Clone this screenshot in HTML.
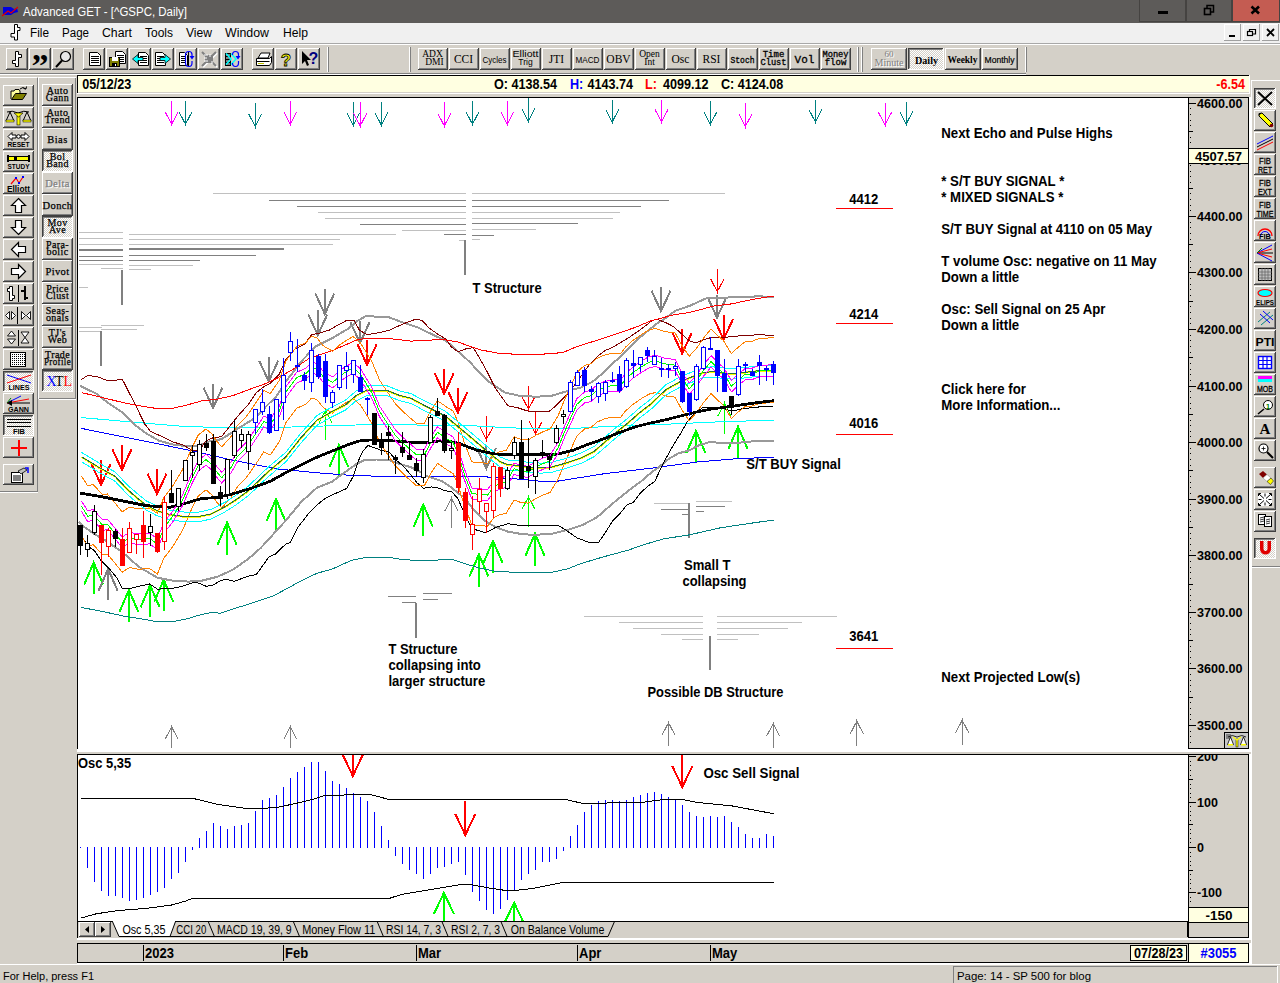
<!DOCTYPE html><html><head><meta charset="utf-8"><title>Advanced GET - [^GSPC, Daily]</title>
<style>html,body{margin:0;padding:0;background:#d4d0c8}svg{display:block}text{white-space:pre}</style></head><body>
<svg width="1280" height="983" viewBox="0 0 1280 983">
<defs><pattern id="hatch" width="2" height="2" patternUnits="userSpaceOnUse"><rect width="2" height="2" fill="#fff"/><rect width="1" height="1" fill="#d4d0c8"/><rect x="1" y="1" width="1" height="1" fill="#d4d0c8"/></pattern>
<clipPath id="cosc"><rect x="78" y="755" width="1110" height="166"/></clipPath>
<clipPath id="cmain"><rect x="78" y="98" width="1110" height="651"/></clipPath></defs>
<rect x="0" y="0" width="1280" height="983" fill="#d4d0c8" />
<rect x="0" y="0" width="1280" height="23" fill="#5d5b59" />
<path d="M3,7 L11,7 L14,9 L17,8 L18,12 L14,13 L11,15 L3,15 Z" fill="#0000e0"/>
<path d="M2,16 L8,11 L11,13 L18,7" fill="none" stroke="#e00000" stroke-width="1.3"/>
<text x="23" y="16" font-size="12" font-weight="normal" fill="#fff" text-anchor="start" font-family="'Liberation Sans',sans-serif" textLength="164" lengthAdjust="spacingAndGlyphs" >Advanced GET - [^GSPC, Daily]</text>
<rect x="1139" y="0" width="47" height="22" fill="#454341" />
<rect x="1140" y="0" width="45" height="21" fill="#5d5b59" />
<rect x="1186" y="0" width="46" height="22" fill="#454341" />
<rect x="1187" y="0" width="44" height="21" fill="#5d5b59" />
<rect x="1232" y="0" width="48" height="22" fill="#454341" />
<rect x="1233" y="0" width="46" height="21" fill="#c45c52" />
<rect x="1158" y="11" width="10" height="3" fill="#000" />
<rect x="1204.500" y="8.500" width="6" height="6" fill="none" stroke="#000" stroke-width="1.600"/><path d="M1207,8V5.500H1213.500V12H1211" fill="none" stroke="#000" stroke-width="1.500"/>
<path d="M1251.5,6.5L1259,13.5M1259,6.500L1251.500,13.500" stroke="#000" stroke-width="2.6"/>
<rect x="0" y="23" width="1280" height="20" fill="#f0f0f0" />
<rect x="0" y="43" width="1280" height="1" fill="#a8a8a8"/>
<path d="M14.5,24.5h3v3h2.500v3h-2.500v9.500h-3v-3h-3.500v-3.500h3.500z" fill="#fff" stroke="#000" stroke-width="1"/>
<text x="30" y="37" font-size="12" font-weight="normal" fill="#000" text-anchor="start" font-family="'Liberation Sans',sans-serif" textLength="19" lengthAdjust="spacingAndGlyphs" >File</text>
<text x="62" y="37" font-size="12" font-weight="normal" fill="#000" text-anchor="start" font-family="'Liberation Sans',sans-serif" textLength="27" lengthAdjust="spacingAndGlyphs" >Page</text>
<text x="102" y="37" font-size="12" font-weight="normal" fill="#000" text-anchor="start" font-family="'Liberation Sans',sans-serif" textLength="30" lengthAdjust="spacingAndGlyphs" >Chart</text>
<text x="145" y="37" font-size="12" font-weight="normal" fill="#000" text-anchor="start" font-family="'Liberation Sans',sans-serif" textLength="28" lengthAdjust="spacingAndGlyphs" >Tools</text>
<text x="186" y="37" font-size="12" font-weight="normal" fill="#000" text-anchor="start" font-family="'Liberation Sans',sans-serif" textLength="26" lengthAdjust="spacingAndGlyphs" >View</text>
<text x="225" y="37" font-size="12" font-weight="normal" fill="#000" text-anchor="start" font-family="'Liberation Sans',sans-serif" textLength="44" lengthAdjust="spacingAndGlyphs" >Window</text>
<text x="283" y="37" font-size="12" font-weight="normal" fill="#000" text-anchor="start" font-family="'Liberation Sans',sans-serif" textLength="25" lengthAdjust="spacingAndGlyphs" >Help</text>
<rect x="1224" y="24" width="17" height="17" fill="#f0f0f0" />
<rect x="1224" y="24" width="17" height="1" fill="#fff"/>
<rect x="1224" y="24" width="1" height="17" fill="#fff"/>
<rect x="1224" y="40" width="17" height="1" fill="#a0a0a0"/>
<rect x="1240" y="24" width="1" height="17" fill="#a0a0a0"/>
<rect x="1243" y="24" width="17" height="17" fill="#f0f0f0" />
<rect x="1243" y="24" width="17" height="1" fill="#fff"/>
<rect x="1243" y="24" width="1" height="17" fill="#fff"/>
<rect x="1243" y="40" width="17" height="1" fill="#a0a0a0"/>
<rect x="1259" y="24" width="1" height="17" fill="#a0a0a0"/>
<rect x="1262" y="24" width="17" height="17" fill="#f0f0f0" />
<rect x="1262" y="24" width="17" height="1" fill="#fff"/>
<rect x="1262" y="24" width="1" height="17" fill="#fff"/>
<rect x="1262" y="40" width="17" height="1" fill="#a0a0a0"/>
<rect x="1278" y="24" width="1" height="17" fill="#a0a0a0"/>
<rect x="1229" y="35" width="6" height="2" fill="#000" />
<rect x="1247.500" y="31.500" width="5" height="4" fill="none" stroke="#000" stroke-width="1.200"/><path d="M1249.500,31V29.500H1255.500V34H1253" fill="none" stroke="#000" stroke-width="1.200"/>
<path d="M1267,29L1274,36M1274,29L1267,36" stroke="#000" stroke-width="1.800"/>
<rect x="0" y="44" width="1280" height="1" fill="#fff"/>
<rect x="0" y="73" width="1026" height="1" fill="#808080"/>
<rect x="0" y="74" width="1026" height="1" fill="#fff"/>
<g transform="translate(0,1)">
<rect x="6" y="47" width="22" height="22" fill="#d4d0c8" />
<rect x="6" y="47" width="21" height="1" fill="#fff"/>
<rect x="6" y="47" width="1" height="21" fill="#fff"/>
<rect x="6" y="68" width="22" height="1" fill="#404040"/>
<rect x="27" y="47" width="1" height="22" fill="#404040"/>
<rect x="7" y="67" width="20" height="1" fill="#808080"/>
<rect x="26" y="48" width="1" height="20" fill="#808080"/>
<rect x="29" y="47" width="22" height="22" fill="#d4d0c8" />
<rect x="29" y="47" width="21" height="1" fill="#fff"/>
<rect x="29" y="47" width="1" height="21" fill="#fff"/>
<rect x="29" y="68" width="22" height="1" fill="#404040"/>
<rect x="50" y="47" width="1" height="22" fill="#404040"/>
<rect x="30" y="67" width="20" height="1" fill="#808080"/>
<rect x="49" y="48" width="1" height="20" fill="#808080"/>
<rect x="52" y="47" width="22" height="22" fill="#d4d0c8" />
<rect x="52" y="47" width="21" height="1" fill="#fff"/>
<rect x="52" y="47" width="1" height="21" fill="#fff"/>
<rect x="52" y="68" width="22" height="1" fill="#404040"/>
<rect x="73" y="47" width="1" height="22" fill="#404040"/>
<rect x="53" y="67" width="20" height="1" fill="#808080"/>
<rect x="72" y="48" width="1" height="20" fill="#808080"/>
<rect x="83" y="47" width="22" height="22" fill="#d4d0c8" />
<rect x="83" y="47" width="21" height="1" fill="#fff"/>
<rect x="83" y="47" width="1" height="21" fill="#fff"/>
<rect x="83" y="68" width="22" height="1" fill="#404040"/>
<rect x="104" y="47" width="1" height="22" fill="#404040"/>
<rect x="84" y="67" width="20" height="1" fill="#808080"/>
<rect x="103" y="48" width="1" height="20" fill="#808080"/>
<rect x="106" y="47" width="22" height="22" fill="#d4d0c8" />
<rect x="106" y="47" width="21" height="1" fill="#fff"/>
<rect x="106" y="47" width="1" height="21" fill="#fff"/>
<rect x="106" y="68" width="22" height="1" fill="#404040"/>
<rect x="127" y="47" width="1" height="22" fill="#404040"/>
<rect x="107" y="67" width="20" height="1" fill="#808080"/>
<rect x="126" y="48" width="1" height="20" fill="#808080"/>
<rect x="129" y="47" width="22" height="22" fill="#d4d0c8" />
<rect x="129" y="47" width="21" height="1" fill="#fff"/>
<rect x="129" y="47" width="1" height="21" fill="#fff"/>
<rect x="129" y="68" width="22" height="1" fill="#404040"/>
<rect x="150" y="47" width="1" height="22" fill="#404040"/>
<rect x="130" y="67" width="20" height="1" fill="#808080"/>
<rect x="149" y="48" width="1" height="20" fill="#808080"/>
<rect x="152" y="47" width="22" height="22" fill="#d4d0c8" />
<rect x="152" y="47" width="21" height="1" fill="#fff"/>
<rect x="152" y="47" width="1" height="21" fill="#fff"/>
<rect x="152" y="68" width="22" height="1" fill="#404040"/>
<rect x="173" y="47" width="1" height="22" fill="#404040"/>
<rect x="153" y="67" width="20" height="1" fill="#808080"/>
<rect x="172" y="48" width="1" height="20" fill="#808080"/>
<rect x="175" y="47" width="22" height="22" fill="#d4d0c8" />
<rect x="175" y="47" width="21" height="1" fill="#fff"/>
<rect x="175" y="47" width="1" height="21" fill="#fff"/>
<rect x="175" y="68" width="22" height="1" fill="#404040"/>
<rect x="196" y="47" width="1" height="22" fill="#404040"/>
<rect x="176" y="67" width="20" height="1" fill="#808080"/>
<rect x="195" y="48" width="1" height="20" fill="#808080"/>
<rect x="198" y="47" width="22" height="22" fill="#d4d0c8" />
<rect x="198" y="47" width="21" height="1" fill="#fff"/>
<rect x="198" y="47" width="1" height="21" fill="#fff"/>
<rect x="198" y="68" width="22" height="1" fill="#404040"/>
<rect x="219" y="47" width="1" height="22" fill="#404040"/>
<rect x="199" y="67" width="20" height="1" fill="#808080"/>
<rect x="218" y="48" width="1" height="20" fill="#808080"/>
<rect x="221" y="47" width="22" height="22" fill="#d4d0c8" />
<rect x="221" y="47" width="21" height="1" fill="#fff"/>
<rect x="221" y="47" width="1" height="21" fill="#fff"/>
<rect x="221" y="68" width="22" height="1" fill="#404040"/>
<rect x="242" y="47" width="1" height="22" fill="#404040"/>
<rect x="222" y="67" width="20" height="1" fill="#808080"/>
<rect x="241" y="48" width="1" height="20" fill="#808080"/>
<rect x="252" y="47" width="22" height="22" fill="#d4d0c8" />
<rect x="252" y="47" width="21" height="1" fill="#fff"/>
<rect x="252" y="47" width="1" height="21" fill="#fff"/>
<rect x="252" y="68" width="22" height="1" fill="#404040"/>
<rect x="273" y="47" width="1" height="22" fill="#404040"/>
<rect x="253" y="67" width="20" height="1" fill="#808080"/>
<rect x="272" y="48" width="1" height="20" fill="#808080"/>
<rect x="275" y="47" width="22" height="22" fill="#d4d0c8" />
<rect x="275" y="47" width="21" height="1" fill="#fff"/>
<rect x="275" y="47" width="1" height="21" fill="#fff"/>
<rect x="275" y="68" width="22" height="1" fill="#404040"/>
<rect x="296" y="47" width="1" height="22" fill="#404040"/>
<rect x="276" y="67" width="20" height="1" fill="#808080"/>
<rect x="295" y="48" width="1" height="20" fill="#808080"/>
<rect x="298" y="47" width="22" height="22" fill="#d4d0c8" />
<rect x="298" y="47" width="21" height="1" fill="#fff"/>
<rect x="298" y="47" width="1" height="21" fill="#fff"/>
<rect x="298" y="68" width="22" height="1" fill="#404040"/>
<rect x="319" y="47" width="1" height="22" fill="#404040"/>
<rect x="299" y="67" width="20" height="1" fill="#808080"/>
<rect x="318" y="48" width="1" height="20" fill="#808080"/>
<path d="M15.5,50.5h3v3h3v3h-3v9h-3v-3h-3v-3h3z" fill="#fff" stroke="#000" stroke-width="1"/>
<text x="40" y="75.5" font-size="34" font-weight="bold" fill="#000" text-anchor="middle" font-family="'Liberation Serif',serif" >”</text>
<circle cx="65.5" cy="55.5" r="5" fill="#e8e8e8" stroke="#000" stroke-width="1.2"/><path d="M62,59.5L56,66" stroke="#000" stroke-width="2"/>
<path d="M89.5,51.5h8l3,3v10h-11z" fill="#fff" stroke="#000" stroke-width="1"/>
<rect x="91" y="55" width="8" height="1" fill="#000"/>
<rect x="91" y="57" width="8" height="1" fill="#000"/>
<rect x="91" y="59" width="8" height="1" fill="#000"/>
<rect x="91" y="61" width="8" height="1" fill="#000"/>
<path d="M115.5,50.5h7l3,3v9h-10z" fill="#fff" stroke="#000" stroke-width="1"/>
<rect x="117" y="54" width="7" height="1" fill="#000"/>
<rect x="117" y="56" width="7" height="1" fill="#000"/>
<rect x="117" y="58" width="7" height="1" fill="#000"/>
<rect x="117" y="60" width="7" height="1" fill="#000"/>
<rect x="109" y="56" width="11" height="10" fill="#000" />
<rect x="110" y="57" width="9" height="8" fill="#808000" />
<rect x="112" y="56" width="6" height="4" fill="#fff" />
<rect x="112" y="62" width="5" height="4" fill="#000" />
<rect x="115" y="63" width="1" height="2" fill="#fff" />
<path d="M138.5,51.5h7l3,3v10h-10z" fill="#fff" stroke="#000" stroke-width="1"/>
<rect x="140" y="55" width="7" height="1" fill="#000"/>
<rect x="140" y="57" width="7" height="1" fill="#000"/>
<rect x="140" y="59" width="7" height="1" fill="#000"/>
<rect x="140" y="61" width="7" height="1" fill="#000"/>
<path d="M132.5,58l5.5,-4.5v3h5v3h-5v3z" fill="#0ff" stroke="#000" stroke-width="0.8"/>
<path d="M155.5,51.5h7l3,3v10h-10z" fill="#fff" stroke="#000" stroke-width="1"/>
<rect x="157" y="55" width="7" height="1" fill="#000"/>
<rect x="157" y="57" width="7" height="1" fill="#000"/>
<rect x="157" y="59" width="7" height="1" fill="#000"/>
<rect x="157" y="61" width="7" height="1" fill="#000"/>
<path d="M170.5,58l-5.5,-4.5v3h-5v3h5v3z" fill="#0ff" stroke="#000" stroke-width="0.8"/>
<path d="M179.5,51.5h5l3,3v10h-8z" fill="#fff" stroke="#000" stroke-width="1"/>
<rect x="181" y="55" width="5" height="1" fill="#000"/>
<rect x="181" y="57" width="5" height="1" fill="#000"/>
<rect x="181" y="59" width="5" height="1" fill="#000"/>
<rect x="181" y="61" width="5" height="1" fill="#000"/>
<path d="M189,50.5q-3.500,0 -3.500,3.500v8q0,3.500 3.500,3.500M189,50.5q3,0 3,3v2M192,60v2q0,3.500 -3,3.500" fill="none" stroke="#00f" stroke-width="1.2"/><path d="M188.500,51v14" stroke="#000" stroke-width="1"/><path d="M189.500,55h5l-2.500,3.500z" fill="#00f"/>
<path d="M202,51L216,65M216,51L202,65" stroke="#fff" stroke-width="2" transform="translate(1,1)"/><path d="M202,51L216,65M216,51L202,65" stroke="#808080" stroke-width="2"/><rect x="205" y="54" width="8" height="8" fill="#808080"/><path d="M204,54h4M204,57h3M204,60h4M210,53v3M212,60v3" stroke="#fff" stroke-width="1"/>
<rect x="225" y="52" width="6" height="13" fill="#000" />
<path d="M226,54h4M226,57h4M226,60h4M226,63h4" stroke="#fff" stroke-width="1"/><path d="M226,52.500l5,5.500l-5,5.500M231,52.500l5,5.500l-5,5.500" fill="none" stroke="#0ff" stroke-width="1.6"/><path d="M235.500,50.500q-3,0 -3,3.500M232.500,62q0,3.500 3,3.500M235.500,50.500q3,0 3,3v2M238.500,60v2q0,3.500 -3,3.500" fill="none" stroke="#00f" stroke-width="1.2"/><path d="M235.500,55h5l-2.500,3.500z" fill="#00f"/>
<path d="M258,57l3,-5h9l-2,5z" fill="#fff" stroke="#000"/><path d="M256.500,57.500h13l2,-2v6l-2,3h-13z" fill="#fff" stroke="#000"/><path d="M256.500,60.500h13" stroke="#000"/><rect x="258" y="62" width="6" height="1" fill="#c0c000"/>
<text x="286" y="64.5" font-size="17" font-weight="bold" fill="#ffff00" text-anchor="middle" font-family="'Liberation Sans',sans-serif" stroke="#000" stroke-width="0.8">?</text>
<path d="M302,50v13l3,-3l2,5l2,-1l-2,-5h4z" fill="#000"/>
<text x="313.5" y="62.5" font-size="16" font-weight="bold" fill="#000080" text-anchor="middle" font-family="'Liberation Sans',sans-serif" >?</text>
<rect x="327" y="46" width="1" height="25" fill="#fff"/>
<rect x="328" y="46" width="1" height="25" fill="#808080"/>
<rect x="409" y="46" width="1" height="25" fill="#fff"/>
<rect x="410" y="46" width="1" height="25" fill="#808080"/>
<rect x="857" y="46" width="1" height="25" fill="#fff"/>
<rect x="858" y="46" width="1" height="25" fill="#808080"/>
<rect x="861" y="46" width="1" height="25" fill="#fff"/>
<rect x="862" y="46" width="1" height="25" fill="#808080"/>
<rect x="1025" y="46" width="1" height="25" fill="#fff"/>
<rect x="1026" y="46" width="1" height="25" fill="#808080"/>
<rect x="418" y="47" width="30" height="22" fill="#d4d0c8" />
<rect x="418" y="47" width="29" height="1" fill="#fff"/>
<rect x="418" y="47" width="1" height="21" fill="#fff"/>
<rect x="418" y="68" width="30" height="1" fill="#404040"/>
<rect x="447" y="47" width="1" height="22" fill="#404040"/>
<rect x="419" y="67" width="28" height="1" fill="#808080"/>
<rect x="446" y="48" width="1" height="20" fill="#808080"/>
<text x="432.5" y="56" font-size="9.5" font-weight="normal" fill="#000" text-anchor="middle" font-family="'Liberation Serif',serif" >ADX</text>
<text x="434.5" y="64" font-size="9.5" font-weight="normal" fill="#000" text-anchor="middle" font-family="'Liberation Serif',serif" >DMI</text>
<rect x="449" y="47" width="30" height="22" fill="#d4d0c8" />
<rect x="449" y="47" width="29" height="1" fill="#fff"/>
<rect x="449" y="47" width="1" height="21" fill="#fff"/>
<rect x="449" y="68" width="30" height="1" fill="#404040"/>
<rect x="478" y="47" width="1" height="22" fill="#404040"/>
<rect x="450" y="67" width="28" height="1" fill="#808080"/>
<rect x="477" y="48" width="1" height="20" fill="#808080"/>
<text x="463.5" y="61.5" font-size="11.5" font-weight="normal" fill="#000" text-anchor="middle" font-family="'Liberation Serif',serif" >CCI</text>
<rect x="480" y="47" width="30" height="22" fill="#d4d0c8" />
<rect x="480" y="47" width="29" height="1" fill="#fff"/>
<rect x="480" y="47" width="1" height="21" fill="#fff"/>
<rect x="480" y="68" width="30" height="1" fill="#404040"/>
<rect x="509" y="47" width="1" height="22" fill="#404040"/>
<rect x="481" y="67" width="28" height="1" fill="#808080"/>
<rect x="508" y="48" width="1" height="20" fill="#808080"/>
<text x="494.5" y="61.5" font-size="9" font-weight="normal" fill="#000" text-anchor="middle" font-family="'Liberation Sans',sans-serif" textLength="24" lengthAdjust="spacingAndGlyphs" >Cycles</text>
<rect x="511" y="47" width="30" height="22" fill="#d4d0c8" />
<rect x="511" y="47" width="29" height="1" fill="#fff"/>
<rect x="511" y="47" width="1" height="21" fill="#fff"/>
<rect x="511" y="68" width="30" height="1" fill="#404040"/>
<rect x="540" y="47" width="1" height="22" fill="#404040"/>
<rect x="512" y="67" width="28" height="1" fill="#808080"/>
<rect x="539" y="48" width="1" height="20" fill="#808080"/>
<text x="525.5" y="56" font-size="8.5" font-weight="normal" fill="#000" text-anchor="middle" font-family="'Liberation Sans',sans-serif" textLength="26" lengthAdjust="spacingAndGlyphs" >Elliott</text>
<text x="525.5" y="64" font-size="8.5" font-weight="normal" fill="#000" text-anchor="middle" font-family="'Liberation Sans',sans-serif" >Trig</text>
<rect x="542" y="47" width="30" height="22" fill="#d4d0c8" />
<rect x="542" y="47" width="29" height="1" fill="#fff"/>
<rect x="542" y="47" width="1" height="21" fill="#fff"/>
<rect x="542" y="68" width="30" height="1" fill="#404040"/>
<rect x="571" y="47" width="1" height="22" fill="#404040"/>
<rect x="543" y="67" width="28" height="1" fill="#808080"/>
<rect x="570" y="48" width="1" height="20" fill="#808080"/>
<text x="556.5" y="61.5" font-size="11.5" font-weight="normal" fill="#000" text-anchor="middle" font-family="'Liberation Serif',serif" >JTI</text>
<rect x="573" y="47" width="30" height="22" fill="#d4d0c8" />
<rect x="573" y="47" width="29" height="1" fill="#fff"/>
<rect x="573" y="47" width="1" height="21" fill="#fff"/>
<rect x="573" y="68" width="30" height="1" fill="#404040"/>
<rect x="602" y="47" width="1" height="22" fill="#404040"/>
<rect x="574" y="67" width="28" height="1" fill="#808080"/>
<rect x="601" y="48" width="1" height="20" fill="#808080"/>
<text x="587.5" y="61.5" font-size="8.5" font-weight="normal" fill="#000" text-anchor="middle" font-family="'Liberation Sans',sans-serif" textLength="24" lengthAdjust="spacingAndGlyphs" >MACD</text>
<rect x="604" y="47" width="30" height="22" fill="#d4d0c8" />
<rect x="604" y="47" width="29" height="1" fill="#fff"/>
<rect x="604" y="47" width="1" height="21" fill="#fff"/>
<rect x="604" y="68" width="30" height="1" fill="#404040"/>
<rect x="633" y="47" width="1" height="22" fill="#404040"/>
<rect x="605" y="67" width="28" height="1" fill="#808080"/>
<rect x="632" y="48" width="1" height="20" fill="#808080"/>
<text x="618.5" y="61.5" font-size="11.5" font-weight="normal" fill="#000" text-anchor="middle" font-family="'Liberation Serif',serif" >OBV</text>
<rect x="635" y="47" width="30" height="22" fill="#d4d0c8" />
<rect x="635" y="47" width="29" height="1" fill="#fff"/>
<rect x="635" y="47" width="1" height="21" fill="#fff"/>
<rect x="635" y="68" width="30" height="1" fill="#404040"/>
<rect x="664" y="47" width="1" height="22" fill="#404040"/>
<rect x="636" y="67" width="28" height="1" fill="#808080"/>
<rect x="663" y="48" width="1" height="20" fill="#808080"/>
<text x="649.5" y="56" font-size="9.5" font-weight="normal" fill="#000" text-anchor="middle" font-family="'Liberation Serif',serif" >Open</text>
<text x="649.5" y="64" font-size="9.5" font-weight="normal" fill="#000" text-anchor="middle" font-family="'Liberation Serif',serif" >Int</text>
<rect x="666" y="47" width="30" height="22" fill="#d4d0c8" />
<rect x="666" y="47" width="29" height="1" fill="#fff"/>
<rect x="666" y="47" width="1" height="21" fill="#fff"/>
<rect x="666" y="68" width="30" height="1" fill="#404040"/>
<rect x="695" y="47" width="1" height="22" fill="#404040"/>
<rect x="667" y="67" width="28" height="1" fill="#808080"/>
<rect x="694" y="48" width="1" height="20" fill="#808080"/>
<text x="680.5" y="61.5" font-size="11.5" font-weight="normal" fill="#000" text-anchor="middle" font-family="'Liberation Serif',serif" >Osc</text>
<rect x="697" y="47" width="30" height="22" fill="#d4d0c8" />
<rect x="697" y="47" width="29" height="1" fill="#fff"/>
<rect x="697" y="47" width="1" height="21" fill="#fff"/>
<rect x="697" y="68" width="30" height="1" fill="#404040"/>
<rect x="726" y="47" width="1" height="22" fill="#404040"/>
<rect x="698" y="67" width="28" height="1" fill="#808080"/>
<rect x="725" y="48" width="1" height="20" fill="#808080"/>
<text x="711.5" y="61.5" font-size="11.5" font-weight="normal" fill="#000" text-anchor="middle" font-family="'Liberation Serif',serif" >RSI</text>
<rect x="728" y="47" width="30" height="22" fill="#d4d0c8" />
<rect x="728" y="47" width="29" height="1" fill="#fff"/>
<rect x="728" y="47" width="1" height="21" fill="#fff"/>
<rect x="728" y="68" width="30" height="1" fill="#404040"/>
<rect x="757" y="47" width="1" height="22" fill="#404040"/>
<rect x="729" y="67" width="28" height="1" fill="#808080"/>
<rect x="756" y="48" width="1" height="20" fill="#808080"/>
<text x="742.5" y="61.5" font-size="9" font-weight="normal" fill="#000" text-anchor="middle" font-family="'Liberation Mono',monospace" textLength="24" lengthAdjust="spacingAndGlyphs" stroke="#000" stroke-width="0.3">Stoch</text>
<rect x="759" y="47" width="30" height="22" fill="#d4d0c8" />
<rect x="759" y="47" width="29" height="1" fill="#fff"/>
<rect x="759" y="47" width="1" height="21" fill="#fff"/>
<rect x="759" y="68" width="30" height="1" fill="#404040"/>
<rect x="788" y="47" width="1" height="22" fill="#404040"/>
<rect x="760" y="67" width="28" height="1" fill="#808080"/>
<rect x="787" y="48" width="1" height="20" fill="#808080"/>
<text x="773.5" y="56" font-size="9" font-weight="normal" fill="#000" text-anchor="middle" font-family="'Liberation Mono',monospace" stroke="#000" stroke-width="0.3">Time</text>
<text x="773.5" y="64" font-size="9" font-weight="normal" fill="#000" text-anchor="middle" font-family="'Liberation Mono',monospace" textLength="26" lengthAdjust="spacingAndGlyphs" stroke="#000" stroke-width="0.3">Clust</text>
<rect x="790" y="47" width="30" height="22" fill="#d4d0c8" />
<rect x="790" y="47" width="29" height="1" fill="#fff"/>
<rect x="790" y="47" width="1" height="21" fill="#fff"/>
<rect x="790" y="68" width="30" height="1" fill="#404040"/>
<rect x="819" y="47" width="1" height="22" fill="#404040"/>
<rect x="791" y="67" width="28" height="1" fill="#808080"/>
<rect x="818" y="48" width="1" height="20" fill="#808080"/>
<text x="804.5" y="61.5" font-size="11" font-weight="normal" fill="#000" text-anchor="middle" font-family="'Liberation Mono',monospace" stroke="#000" stroke-width="0.3">Vol</text>
<rect x="821" y="47" width="30" height="22" fill="#d4d0c8" />
<rect x="821" y="47" width="29" height="1" fill="#fff"/>
<rect x="821" y="47" width="1" height="21" fill="#fff"/>
<rect x="821" y="68" width="30" height="1" fill="#404040"/>
<rect x="850" y="47" width="1" height="22" fill="#404040"/>
<rect x="822" y="67" width="28" height="1" fill="#808080"/>
<rect x="849" y="48" width="1" height="20" fill="#808080"/>
<text x="835.5" y="56" font-size="9" font-weight="normal" fill="#000" text-anchor="middle" font-family="'Liberation Mono',monospace" textLength="26" lengthAdjust="spacingAndGlyphs" stroke="#000" stroke-width="0.3">Money</text>
<text x="835.5" y="64" font-size="9" font-weight="normal" fill="#000" text-anchor="middle" font-family="'Liberation Mono',monospace" stroke="#000" stroke-width="0.3">flow</text>
<rect x="871" y="47" width="36" height="22" fill="#d4d0c8" />
<rect x="871" y="47" width="35" height="1" fill="#fff"/>
<rect x="871" y="47" width="1" height="21" fill="#fff"/>
<rect x="871" y="68" width="36" height="1" fill="#404040"/>
<rect x="906" y="47" width="1" height="22" fill="#404040"/>
<rect x="872" y="67" width="34" height="1" fill="#808080"/>
<rect x="905" y="48" width="1" height="20" fill="#808080"/>
<text x="890" y="56.5" font-size="9" font-weight="normal" fill="#fff" text-anchor="middle" font-family="'Liberation Serif',serif" >60</text>
<text x="890" y="65.5" font-size="9.5" font-weight="normal" fill="#fff" text-anchor="middle" font-family="'Liberation Serif',serif" textLength="29" lengthAdjust="spacingAndGlyphs" >Minute</text>
<text x="889" y="55.5" font-size="9" font-weight="normal" fill="#808080" text-anchor="middle" font-family="'Liberation Serif',serif" >60</text>
<text x="889" y="64.5" font-size="9.5" font-weight="normal" fill="#808080" text-anchor="middle" font-family="'Liberation Serif',serif" textLength="29" lengthAdjust="spacingAndGlyphs" >Minute</text>
<rect x="908" y="47" width="36" height="22" fill="url(#hatch)" />
<rect x="908" y="47" width="35" height="1" fill="#404040"/>
<rect x="908" y="47" width="1" height="21" fill="#404040"/>
<rect x="909" y="48" width="33" height="1" fill="#808080"/>
<rect x="909" y="48" width="1" height="19" fill="#808080"/>
<rect x="908" y="68" width="36" height="1" fill="#fff"/>
<rect x="943" y="47" width="1" height="22" fill="#fff"/>
<text x="926.5" y="62.5" font-size="11" font-weight="bold" fill="#000" text-anchor="middle" font-family="'Liberation Serif',serif" textLength="23" lengthAdjust="spacingAndGlyphs" >Daily</text>
<rect x="945" y="47" width="36" height="22" fill="#d4d0c8" />
<rect x="945" y="47" width="35" height="1" fill="#fff"/>
<rect x="945" y="47" width="1" height="21" fill="#fff"/>
<rect x="945" y="68" width="36" height="1" fill="#404040"/>
<rect x="980" y="47" width="1" height="22" fill="#404040"/>
<rect x="946" y="67" width="34" height="1" fill="#808080"/>
<rect x="979" y="48" width="1" height="20" fill="#808080"/>
<text x="962.5" y="62" font-size="11" font-weight="bold" fill="#000" text-anchor="middle" font-family="'Liberation Serif',serif" textLength="30" lengthAdjust="spacingAndGlyphs" >Weekly</text>
<rect x="982" y="47" width="36" height="22" fill="#d4d0c8" />
<rect x="982" y="47" width="35" height="1" fill="#fff"/>
<rect x="982" y="47" width="1" height="21" fill="#fff"/>
<rect x="982" y="68" width="36" height="1" fill="#404040"/>
<rect x="1017" y="47" width="1" height="22" fill="#404040"/>
<rect x="983" y="67" width="34" height="1" fill="#808080"/>
<rect x="1016" y="48" width="1" height="20" fill="#808080"/>
<text x="999.5" y="61.5" font-size="9.5" font-weight="normal" fill="#000" text-anchor="middle" font-family="'Liberation Sans',sans-serif" textLength="30" lengthAdjust="spacingAndGlyphs" stroke="#000" stroke-width="0.2">Monthly</text>
</g>
<rect x="0" y="77" width="37" height="1" fill="#fff"/>
<rect x="37" y="78" width="1" height="414" fill="#808080"/>
<rect x="0" y="491" width="38" height="1" fill="#808080"/>
<rect x="0" y="492" width="38" height="1" fill="#fff"/>
<rect x="38" y="77" width="38" height="1" fill="#fff"/>
<rect x="38" y="77" width="1" height="322" fill="#fff"/>
<rect x="75" y="78" width="1" height="321" fill="#808080"/>
<rect x="39" y="398" width="37" height="1" fill="#808080"/>
<rect x="39" y="399" width="37" height="1" fill="#fff"/>
<rect x="3" y="85" width="31" height="21" fill="#d4d0c8" />
<rect x="3" y="85" width="30" height="1" fill="#fff"/>
<rect x="3" y="85" width="1" height="20" fill="#fff"/>
<rect x="3" y="105" width="31" height="1" fill="#404040"/>
<rect x="33" y="85" width="1" height="21" fill="#404040"/>
<rect x="4" y="104" width="29" height="1" fill="#808080"/>
<rect x="32" y="86" width="1" height="19" fill="#808080"/>
<rect x="3" y="107" width="31" height="21" fill="#d4d0c8" />
<rect x="3" y="107" width="30" height="1" fill="#fff"/>
<rect x="3" y="107" width="1" height="20" fill="#fff"/>
<rect x="3" y="127" width="31" height="1" fill="#404040"/>
<rect x="33" y="107" width="1" height="21" fill="#404040"/>
<rect x="4" y="126" width="29" height="1" fill="#808080"/>
<rect x="32" y="108" width="1" height="19" fill="#808080"/>
<rect x="3" y="129" width="31" height="21" fill="#d4d0c8" />
<rect x="3" y="129" width="30" height="1" fill="#fff"/>
<rect x="3" y="129" width="1" height="20" fill="#fff"/>
<rect x="3" y="149" width="31" height="1" fill="#404040"/>
<rect x="33" y="129" width="1" height="21" fill="#404040"/>
<rect x="4" y="148" width="29" height="1" fill="#808080"/>
<rect x="32" y="130" width="1" height="19" fill="#808080"/>
<rect x="3" y="151" width="31" height="21" fill="#d4d0c8" />
<rect x="3" y="151" width="30" height="1" fill="#fff"/>
<rect x="3" y="151" width="1" height="20" fill="#fff"/>
<rect x="3" y="171" width="31" height="1" fill="#404040"/>
<rect x="33" y="151" width="1" height="21" fill="#404040"/>
<rect x="4" y="170" width="29" height="1" fill="#808080"/>
<rect x="32" y="152" width="1" height="19" fill="#808080"/>
<rect x="3" y="173" width="31" height="21" fill="#d4d0c8" />
<rect x="3" y="173" width="30" height="1" fill="#fff"/>
<rect x="3" y="173" width="1" height="20" fill="#fff"/>
<rect x="3" y="193" width="31" height="1" fill="#404040"/>
<rect x="33" y="173" width="1" height="21" fill="#404040"/>
<rect x="4" y="192" width="29" height="1" fill="#808080"/>
<rect x="32" y="174" width="1" height="19" fill="#808080"/>
<rect x="3" y="195" width="31" height="21" fill="#d4d0c8" />
<rect x="3" y="195" width="30" height="1" fill="#fff"/>
<rect x="3" y="195" width="1" height="20" fill="#fff"/>
<rect x="3" y="215" width="31" height="1" fill="#404040"/>
<rect x="33" y="195" width="1" height="21" fill="#404040"/>
<rect x="4" y="214" width="29" height="1" fill="#808080"/>
<rect x="32" y="196" width="1" height="19" fill="#808080"/>
<rect x="3" y="217" width="31" height="21" fill="#d4d0c8" />
<rect x="3" y="217" width="30" height="1" fill="#fff"/>
<rect x="3" y="217" width="1" height="20" fill="#fff"/>
<rect x="3" y="237" width="31" height="1" fill="#404040"/>
<rect x="33" y="217" width="1" height="21" fill="#404040"/>
<rect x="4" y="236" width="29" height="1" fill="#808080"/>
<rect x="32" y="218" width="1" height="19" fill="#808080"/>
<rect x="3" y="239" width="31" height="21" fill="#d4d0c8" />
<rect x="3" y="239" width="30" height="1" fill="#fff"/>
<rect x="3" y="239" width="1" height="20" fill="#fff"/>
<rect x="3" y="259" width="31" height="1" fill="#404040"/>
<rect x="33" y="239" width="1" height="21" fill="#404040"/>
<rect x="4" y="258" width="29" height="1" fill="#808080"/>
<rect x="32" y="240" width="1" height="19" fill="#808080"/>
<rect x="3" y="261" width="31" height="21" fill="#d4d0c8" />
<rect x="3" y="261" width="30" height="1" fill="#fff"/>
<rect x="3" y="261" width="1" height="20" fill="#fff"/>
<rect x="3" y="281" width="31" height="1" fill="#404040"/>
<rect x="33" y="261" width="1" height="21" fill="#404040"/>
<rect x="4" y="280" width="29" height="1" fill="#808080"/>
<rect x="32" y="262" width="1" height="19" fill="#808080"/>
<rect x="3" y="283" width="31" height="21" fill="#d4d0c8" />
<rect x="3" y="283" width="30" height="1" fill="#fff"/>
<rect x="3" y="283" width="1" height="20" fill="#fff"/>
<rect x="3" y="303" width="31" height="1" fill="#404040"/>
<rect x="33" y="283" width="1" height="21" fill="#404040"/>
<rect x="4" y="302" width="29" height="1" fill="#808080"/>
<rect x="32" y="284" width="1" height="19" fill="#808080"/>
<rect x="3" y="305" width="31" height="21" fill="#d4d0c8" />
<rect x="3" y="305" width="30" height="1" fill="#fff"/>
<rect x="3" y="305" width="1" height="20" fill="#fff"/>
<rect x="3" y="325" width="31" height="1" fill="#404040"/>
<rect x="33" y="305" width="1" height="21" fill="#404040"/>
<rect x="4" y="324" width="29" height="1" fill="#808080"/>
<rect x="32" y="306" width="1" height="19" fill="#808080"/>
<rect x="3" y="327" width="31" height="21" fill="#d4d0c8" />
<rect x="3" y="327" width="30" height="1" fill="#fff"/>
<rect x="3" y="327" width="1" height="20" fill="#fff"/>
<rect x="3" y="347" width="31" height="1" fill="#404040"/>
<rect x="33" y="327" width="1" height="21" fill="#404040"/>
<rect x="4" y="346" width="29" height="1" fill="#808080"/>
<rect x="32" y="328" width="1" height="19" fill="#808080"/>
<rect x="3" y="349" width="31" height="21" fill="#d4d0c8" />
<rect x="3" y="349" width="30" height="1" fill="#fff"/>
<rect x="3" y="349" width="1" height="20" fill="#fff"/>
<rect x="3" y="369" width="31" height="1" fill="#404040"/>
<rect x="33" y="349" width="1" height="21" fill="#404040"/>
<rect x="4" y="368" width="29" height="1" fill="#808080"/>
<rect x="32" y="350" width="1" height="19" fill="#808080"/>
<rect x="3" y="371" width="31" height="21" fill="url(#hatch)" />
<rect x="3" y="371" width="30" height="1" fill="#404040"/>
<rect x="3" y="371" width="1" height="20" fill="#404040"/>
<rect x="4" y="372" width="28" height="1" fill="#808080"/>
<rect x="4" y="372" width="1" height="18" fill="#808080"/>
<rect x="3" y="391" width="31" height="1" fill="#fff"/>
<rect x="33" y="371" width="1" height="21" fill="#fff"/>
<rect x="3" y="393" width="31" height="21" fill="#d4d0c8" />
<rect x="3" y="393" width="30" height="1" fill="#fff"/>
<rect x="3" y="393" width="1" height="20" fill="#fff"/>
<rect x="3" y="413" width="31" height="1" fill="#404040"/>
<rect x="33" y="393" width="1" height="21" fill="#404040"/>
<rect x="4" y="412" width="29" height="1" fill="#808080"/>
<rect x="32" y="394" width="1" height="19" fill="#808080"/>
<rect x="3" y="415" width="31" height="21" fill="url(#hatch)" />
<rect x="3" y="415" width="30" height="1" fill="#404040"/>
<rect x="3" y="415" width="1" height="20" fill="#404040"/>
<rect x="4" y="416" width="28" height="1" fill="#808080"/>
<rect x="4" y="416" width="1" height="18" fill="#808080"/>
<rect x="3" y="435" width="31" height="1" fill="#fff"/>
<rect x="33" y="415" width="1" height="21" fill="#fff"/>
<rect x="3" y="437" width="31" height="21" fill="#d4d0c8" />
<rect x="3" y="437" width="30" height="1" fill="#fff"/>
<rect x="3" y="437" width="1" height="20" fill="#fff"/>
<rect x="3" y="457" width="31" height="1" fill="#404040"/>
<rect x="33" y="437" width="1" height="21" fill="#404040"/>
<rect x="4" y="456" width="29" height="1" fill="#808080"/>
<rect x="32" y="438" width="1" height="19" fill="#808080"/>
<rect x="3" y="464" width="31" height="21" fill="#d4d0c8" />
<rect x="3" y="464" width="30" height="1" fill="#fff"/>
<rect x="3" y="464" width="1" height="20" fill="#fff"/>
<rect x="3" y="484" width="31" height="1" fill="#404040"/>
<rect x="33" y="464" width="1" height="21" fill="#404040"/>
<rect x="4" y="483" width="29" height="1" fill="#808080"/>
<rect x="32" y="465" width="1" height="19" fill="#808080"/>
<path d="M11,99v-8h3l1,-1.500h4l1,1.500h0v2" fill="#ffffa0" stroke="#000" stroke-width="1"/><path d="M11.500,99.500l4,-6h11l-4,6z" fill="#808000" stroke="#000" stroke-width="1"/><path d="M20,89q3,-3 6,0M26,89l-2.500,-0.500M26,89l0.500,-2.500" fill="none" stroke="#000" stroke-width="1"/>
<path d="M7,112q5,-2 11,1q6,-3 11,-1" fill="none" stroke="#000" stroke-width="1"/><path d="M10,112l-4,9h8zM27,112l-4,9h8z" fill="none" stroke="#000" stroke-width="1"/><rect x="6" y="120" width="8" height="2" fill="#ff0" stroke="#000" stroke-width="0.500"/><rect x="23" y="120" width="8" height="2" fill="#ff0" stroke="#000" stroke-width="0.500"/><rect x="17" y="116" width="3" height="9" fill="#ff0" stroke="#000" stroke-width="0.600"/><path d="M14,113l4.500,4l4.500,-4z" fill="#ff0" stroke="#000" stroke-width="0.600"/>
<path d="M8,136.500l4,-4v2.500h4v3h-4v2.500zM29,136.500l-4,-4v2.500h-4v3h4v2.500z" fill="#fff" stroke="#000" stroke-width="1"/><circle cx="18.500" cy="136.500" r="1.800" fill="#fff" stroke="#000"/>
<text x="18.5" y="147" font-size="8" font-weight="bold" fill="#000" text-anchor="middle" font-family="'Liberation Sans',sans-serif" textLength="22" lengthAdjust="spacingAndGlyphs" >RESET</text>
<rect x="8" y="157" width="21" height="3" fill="#ff0" />
<rect x="8" y="156.500" width="21" height="4" fill="none" stroke="#000" stroke-width="1"/>
<rect x="7" y="155" width="2" height="7" fill="#000" />
<rect x="28" y="155" width="2" height="7" fill="#000" />
<rect x="14" y="157" width="3" height="3" fill="#000" />
<text x="18.5" y="169" font-size="8" font-weight="bold" fill="#000" text-anchor="middle" font-family="'Liberation Sans',sans-serif" textLength="22" lengthAdjust="spacingAndGlyphs" >STUDY</text>
<path d="M11,184l5,-6l3,5l4,-6" fill="none" stroke="#f00" stroke-width="1.200"/>
<rect x="15" y="177" width="2" height="2" fill="#00f" />
<rect x="18" y="182" width="2" height="2" fill="#00f" />
<rect x="22" y="176" width="2" height="2" fill="#00f" />
<text x="18.5" y="191.5" font-size="9" font-weight="bold" fill="#000" text-anchor="middle" font-family="'Liberation Sans',sans-serif" textLength="23" lengthAdjust="spacingAndGlyphs" >Elliott</text>
<path d="M18.500,198.500l7,7h-4v7h-6v-7h-4z" fill="#fff" stroke="#000" stroke-width="1.200"/>
<path d="M18.500,234.500l7,-7h-4v-7h-6v7h-4z" fill="#fff" stroke="#000" stroke-width="1.200"/>
<path d="M11.500,249.500l7,-7v4h7v6h-7v4z" fill="#fff" stroke="#000" stroke-width="1.200"/>
<path d="M25.500,271.500l-7,-7v4h-7v6h7v4z" fill="#fff" stroke="#000" stroke-width="1.200"/>
<path d="M9.500,286.500h3v9h2v3h-2v2h-3v-9h-2v-3h2z" fill="#fff" stroke="#000" stroke-width="1"/>
<rect x="18" y="285" width="1" height="17" fill="#000"/>
<rect x="24" y="286" width="2" height="14" fill="#000"/>
<rect x="21" y="290" width="3" height="2" fill="#000"/>
<rect x="26" y="297" width="2" height="2" fill="#000"/>
<path d="M5.5,315.5l4,-4v8zM15.5,315.5l-4,-4v8zM25.5,315.5l-4,-4v8zM26.5,315.5l4,-4v8z" fill="#fff" stroke="#000" stroke-width="0.9"/>
<rect x="17" y="307" width="1" height="17" fill="#000"/>
<path d="M11.500,331l4,5h-8zM11.500,344l4,-5h-8zM21,332h8l-8,11h8z" fill="#fff" stroke="#000" stroke-width="0.900"/>
<rect x="18" y="330" width="1" height="16" fill="#000"/>
<rect x="10.500" y="352.500" width="15" height="14" fill="#fff" stroke="#000"/>
<rect x="12" y="354" width="1" height="1" fill="#000" />
<rect x="12" y="356" width="1" height="1" fill="#000" />
<rect x="12" y="358" width="1" height="1" fill="#000" />
<rect x="12" y="360" width="1" height="1" fill="#000" />
<rect x="12" y="362" width="1" height="1" fill="#000" />
<rect x="12" y="364" width="1" height="1" fill="#000" />
<rect x="14" y="354" width="1" height="1" fill="#000" />
<rect x="14" y="356" width="1" height="1" fill="#000" />
<rect x="14" y="358" width="1" height="1" fill="#000" />
<rect x="14" y="360" width="1" height="1" fill="#000" />
<rect x="14" y="362" width="1" height="1" fill="#000" />
<rect x="14" y="364" width="1" height="1" fill="#000" />
<rect x="16" y="354" width="1" height="1" fill="#000" />
<rect x="16" y="356" width="1" height="1" fill="#000" />
<rect x="16" y="358" width="1" height="1" fill="#000" />
<rect x="16" y="360" width="1" height="1" fill="#000" />
<rect x="16" y="362" width="1" height="1" fill="#000" />
<rect x="16" y="364" width="1" height="1" fill="#000" />
<rect x="18" y="354" width="1" height="1" fill="#000" />
<rect x="18" y="356" width="1" height="1" fill="#000" />
<rect x="18" y="358" width="1" height="1" fill="#000" />
<rect x="18" y="360" width="1" height="1" fill="#000" />
<rect x="18" y="362" width="1" height="1" fill="#000" />
<rect x="18" y="364" width="1" height="1" fill="#000" />
<rect x="20" y="354" width="1" height="1" fill="#000" />
<rect x="20" y="356" width="1" height="1" fill="#000" />
<rect x="20" y="358" width="1" height="1" fill="#000" />
<rect x="20" y="360" width="1" height="1" fill="#000" />
<rect x="20" y="362" width="1" height="1" fill="#000" />
<rect x="20" y="364" width="1" height="1" fill="#000" />
<rect x="22" y="354" width="1" height="1" fill="#000" />
<rect x="22" y="356" width="1" height="1" fill="#000" />
<rect x="22" y="358" width="1" height="1" fill="#000" />
<rect x="22" y="360" width="1" height="1" fill="#000" />
<rect x="22" y="362" width="1" height="1" fill="#000" />
<rect x="22" y="364" width="1" height="1" fill="#000" />
<rect x="24" y="354" width="1" height="1" fill="#000" />
<rect x="24" y="356" width="1" height="1" fill="#000" />
<rect x="24" y="358" width="1" height="1" fill="#000" />
<rect x="24" y="360" width="1" height="1" fill="#000" />
<rect x="24" y="362" width="1" height="1" fill="#000" />
<rect x="24" y="364" width="1" height="1" fill="#000" />
<path d="M7,375l24,8" stroke="#00f" stroke-width="1"/><path d="M7,383l24,-8" stroke="#f00" stroke-width="1"/>
<text x="19" y="390" font-size="7.5" font-weight="bold" fill="#000" text-anchor="middle" font-family="'Liberation Sans',sans-serif" textLength="21" lengthAdjust="spacingAndGlyphs" >LINES</text>
<path d="M7,403h23" stroke="#000"/><path d="M7,403l14,-7" stroke="#00f"/><path d="M7,403l22,-4" stroke="#f00"/><path d="M7,403l4,-5" stroke="#008000"/><path d="M7,403l5,-3v6z" fill="#000"/>
<text x="18.5" y="412" font-size="7.5" font-weight="bold" fill="#000" text-anchor="middle" font-family="'Liberation Sans',sans-serif" textLength="21" lengthAdjust="spacingAndGlyphs" >GANN</text>
<rect x="7" y="419" width="24" height="1" fill="#000"/>
<rect x="7" y="422" width="24" height="1" fill="#000"/>
<rect x="7" y="426" width="24" height="1" fill="#000"/>
<text x="19" y="434" font-size="7.5" font-weight="bold" fill="#000" text-anchor="middle" font-family="'Liberation Sans',sans-serif" textLength="12" lengthAdjust="spacingAndGlyphs" >FIB</text>
<rect x="11" y="447" width="16" height="2" fill="#f00"/>
<rect x="18" y="440" width="2" height="16" fill="#f00"/>
<rect x="11.500" y="472.500" width="11" height="10" fill="#fff" stroke="#000"/><path d="M13,476h8M13,478h8M13,480h8" stroke="#000"/><path d="M18,471l6,-3l3,2l-6,4z" fill="#c0c0c0" stroke="#000" stroke-width="0.800"/><path d="M25,468h3v5" stroke="#00f" stroke-width="1.500" fill="none"/>
<rect x="42" y="84" width="31" height="22" fill="#d4d0c8" />
<rect x="42" y="84" width="30" height="1" fill="#fff"/>
<rect x="42" y="84" width="1" height="21" fill="#fff"/>
<rect x="42" y="105" width="31" height="1" fill="#404040"/>
<rect x="72" y="84" width="1" height="22" fill="#404040"/>
<rect x="43" y="104" width="29" height="1" fill="#808080"/>
<rect x="71" y="85" width="1" height="20" fill="#808080"/>
<text x="57.5" y="93.7" font-size="10" font-weight="normal" fill="#000" text-anchor="middle" font-family="'Liberation Serif',serif" letter-spacing="0.4" stroke="#000" stroke-width="0.25">Auto</text>
<text x="57.5" y="101.3" font-size="10" font-weight="normal" fill="#000" text-anchor="middle" font-family="'Liberation Serif',serif" letter-spacing="0.4" stroke="#000" stroke-width="0.25">Gann</text>
<rect x="42" y="106" width="31" height="22" fill="#d4d0c8" />
<rect x="42" y="106" width="30" height="1" fill="#fff"/>
<rect x="42" y="106" width="1" height="21" fill="#fff"/>
<rect x="42" y="127" width="31" height="1" fill="#404040"/>
<rect x="72" y="106" width="1" height="22" fill="#404040"/>
<rect x="43" y="126" width="29" height="1" fill="#808080"/>
<rect x="71" y="107" width="1" height="20" fill="#808080"/>
<text x="57.5" y="115.7" font-size="10" font-weight="normal" fill="#000" text-anchor="middle" font-family="'Liberation Serif',serif" letter-spacing="0.4" stroke="#000" stroke-width="0.25">Auto</text>
<text x="57.5" y="123.3" font-size="10" font-weight="normal" fill="#000" text-anchor="middle" font-family="'Liberation Serif',serif" letter-spacing="0.4" stroke="#000" stroke-width="0.25">Trend</text>
<rect x="42" y="128" width="31" height="22" fill="#d4d0c8" />
<rect x="42" y="128" width="30" height="1" fill="#fff"/>
<rect x="42" y="128" width="1" height="21" fill="#fff"/>
<rect x="42" y="149" width="31" height="1" fill="#404040"/>
<rect x="72" y="128" width="1" height="22" fill="#404040"/>
<rect x="43" y="148" width="29" height="1" fill="#808080"/>
<rect x="71" y="129" width="1" height="20" fill="#808080"/>
<text x="57.5" y="142.5" font-size="10.5" font-weight="normal" fill="#000" text-anchor="middle" font-family="'Liberation Serif',serif" letter-spacing="0.4" stroke="#000" stroke-width="0.25">Bias</text>
<rect x="42" y="150" width="31" height="22" fill="url(#hatch)" />
<rect x="42" y="150" width="30" height="1" fill="#404040"/>
<rect x="42" y="150" width="1" height="21" fill="#404040"/>
<rect x="43" y="151" width="28" height="1" fill="#808080"/>
<rect x="43" y="151" width="1" height="19" fill="#808080"/>
<rect x="42" y="171" width="31" height="1" fill="#fff"/>
<rect x="72" y="150" width="1" height="22" fill="#fff"/>
<text x="57.5" y="159.7" font-size="10" font-weight="normal" fill="#000" text-anchor="middle" font-family="'Liberation Serif',serif" letter-spacing="0.4" stroke="#000" stroke-width="0.25">Bol</text>
<text x="57.5" y="167.3" font-size="10" font-weight="normal" fill="#000" text-anchor="middle" font-family="'Liberation Serif',serif" letter-spacing="0.4" stroke="#000" stroke-width="0.25">Band</text>
<rect x="42" y="172" width="31" height="22" fill="#d4d0c8" />
<rect x="42" y="172" width="30" height="1" fill="#fff"/>
<rect x="42" y="172" width="1" height="21" fill="#fff"/>
<rect x="42" y="193" width="31" height="1" fill="#404040"/>
<rect x="72" y="172" width="1" height="22" fill="#404040"/>
<rect x="43" y="192" width="29" height="1" fill="#808080"/>
<rect x="71" y="173" width="1" height="20" fill="#808080"/>
<text x="58.5" y="187.5" font-size="10.5" font-weight="normal" fill="#fff" text-anchor="middle" font-family="'Liberation Serif',serif" letter-spacing="0.4" stroke="#fff" stroke-width="0.25">Delta</text>
<text x="57.5" y="186.5" font-size="10.5" font-weight="normal" fill="#808080" text-anchor="middle" font-family="'Liberation Serif',serif" letter-spacing="0.4" stroke="#808080" stroke-width="0.25">Delta</text>
<rect x="42" y="194" width="31" height="22" fill="#d4d0c8" />
<rect x="42" y="194" width="30" height="1" fill="#fff"/>
<rect x="42" y="194" width="1" height="21" fill="#fff"/>
<rect x="42" y="215" width="31" height="1" fill="#404040"/>
<rect x="72" y="194" width="1" height="22" fill="#404040"/>
<rect x="43" y="214" width="29" height="1" fill="#808080"/>
<rect x="71" y="195" width="1" height="20" fill="#808080"/>
<text x="57.5" y="208.5" font-size="10.5" font-weight="normal" fill="#000" text-anchor="middle" font-family="'Liberation Serif',serif" letter-spacing="0.4" stroke="#000" stroke-width="0.25">Donch</text>
<rect x="42" y="216" width="31" height="22" fill="url(#hatch)" />
<rect x="42" y="216" width="30" height="1" fill="#404040"/>
<rect x="42" y="216" width="1" height="21" fill="#404040"/>
<rect x="43" y="217" width="28" height="1" fill="#808080"/>
<rect x="43" y="217" width="1" height="19" fill="#808080"/>
<rect x="42" y="237" width="31" height="1" fill="#fff"/>
<rect x="72" y="216" width="1" height="22" fill="#fff"/>
<text x="57.5" y="225.7" font-size="10" font-weight="normal" fill="#000" text-anchor="middle" font-family="'Liberation Serif',serif" letter-spacing="0.4" stroke="#000" stroke-width="0.25">Mov</text>
<text x="57.5" y="233.3" font-size="10" font-weight="normal" fill="#000" text-anchor="middle" font-family="'Liberation Serif',serif" letter-spacing="0.4" stroke="#000" stroke-width="0.25">Ave</text>
<rect x="42" y="238" width="31" height="22" fill="#d4d0c8" />
<rect x="42" y="238" width="30" height="1" fill="#fff"/>
<rect x="42" y="238" width="1" height="21" fill="#fff"/>
<rect x="42" y="259" width="31" height="1" fill="#404040"/>
<rect x="72" y="238" width="1" height="22" fill="#404040"/>
<rect x="43" y="258" width="29" height="1" fill="#808080"/>
<rect x="71" y="239" width="1" height="20" fill="#808080"/>
<text x="57.5" y="247.7" font-size="10" font-weight="normal" fill="#000" text-anchor="middle" font-family="'Liberation Serif',serif" letter-spacing="0.4" stroke="#000" stroke-width="0.25">Para-</text>
<text x="57.5" y="255.3" font-size="10" font-weight="normal" fill="#000" text-anchor="middle" font-family="'Liberation Serif',serif" letter-spacing="0.4" stroke="#000" stroke-width="0.25">bolic</text>
<rect x="42" y="260" width="31" height="22" fill="#d4d0c8" />
<rect x="42" y="260" width="30" height="1" fill="#fff"/>
<rect x="42" y="260" width="1" height="21" fill="#fff"/>
<rect x="42" y="281" width="31" height="1" fill="#404040"/>
<rect x="72" y="260" width="1" height="22" fill="#404040"/>
<rect x="43" y="280" width="29" height="1" fill="#808080"/>
<rect x="71" y="261" width="1" height="20" fill="#808080"/>
<text x="57.5" y="274.5" font-size="10.5" font-weight="normal" fill="#000" text-anchor="middle" font-family="'Liberation Serif',serif" letter-spacing="0.4" stroke="#000" stroke-width="0.25">Pivot</text>
<rect x="42" y="282" width="31" height="22" fill="#d4d0c8" />
<rect x="42" y="282" width="30" height="1" fill="#fff"/>
<rect x="42" y="282" width="1" height="21" fill="#fff"/>
<rect x="42" y="303" width="31" height="1" fill="#404040"/>
<rect x="72" y="282" width="1" height="22" fill="#404040"/>
<rect x="43" y="302" width="29" height="1" fill="#808080"/>
<rect x="71" y="283" width="1" height="20" fill="#808080"/>
<text x="57.5" y="291.7" font-size="10" font-weight="normal" fill="#000" text-anchor="middle" font-family="'Liberation Serif',serif" letter-spacing="0.4" stroke="#000" stroke-width="0.25">Price</text>
<text x="57.5" y="299.3" font-size="10" font-weight="normal" fill="#000" text-anchor="middle" font-family="'Liberation Serif',serif" letter-spacing="0.4" stroke="#000" stroke-width="0.25">Clust</text>
<rect x="42" y="304" width="31" height="22" fill="#d4d0c8" />
<rect x="42" y="304" width="30" height="1" fill="#fff"/>
<rect x="42" y="304" width="1" height="21" fill="#fff"/>
<rect x="42" y="325" width="31" height="1" fill="#404040"/>
<rect x="72" y="304" width="1" height="22" fill="#404040"/>
<rect x="43" y="324" width="29" height="1" fill="#808080"/>
<rect x="71" y="305" width="1" height="20" fill="#808080"/>
<text x="57.5" y="313.7" font-size="10" font-weight="normal" fill="#000" text-anchor="middle" font-family="'Liberation Serif',serif" letter-spacing="0.4" stroke="#000" stroke-width="0.25">Seas-</text>
<text x="57.5" y="321.3" font-size="10" font-weight="normal" fill="#000" text-anchor="middle" font-family="'Liberation Serif',serif" letter-spacing="0.4" stroke="#000" stroke-width="0.25">onals</text>
<rect x="42" y="326" width="31" height="22" fill="#d4d0c8" />
<rect x="42" y="326" width="30" height="1" fill="#fff"/>
<rect x="42" y="326" width="1" height="21" fill="#fff"/>
<rect x="42" y="347" width="31" height="1" fill="#404040"/>
<rect x="72" y="326" width="1" height="22" fill="#404040"/>
<rect x="43" y="346" width="29" height="1" fill="#808080"/>
<rect x="71" y="327" width="1" height="20" fill="#808080"/>
<text x="57.5" y="335.7" font-size="10" font-weight="normal" fill="#000" text-anchor="middle" font-family="'Liberation Serif',serif" letter-spacing="0.4" stroke="#000" stroke-width="0.25">TJ's</text>
<text x="57.5" y="343.3" font-size="10" font-weight="normal" fill="#000" text-anchor="middle" font-family="'Liberation Serif',serif" letter-spacing="0.4" stroke="#000" stroke-width="0.25">Web</text>
<rect x="42" y="348" width="31" height="22" fill="#d4d0c8" />
<rect x="42" y="348" width="30" height="1" fill="#fff"/>
<rect x="42" y="348" width="1" height="21" fill="#fff"/>
<rect x="42" y="369" width="31" height="1" fill="#404040"/>
<rect x="72" y="348" width="1" height="22" fill="#404040"/>
<rect x="43" y="368" width="29" height="1" fill="#808080"/>
<rect x="71" y="349" width="1" height="20" fill="#808080"/>
<text x="57.5" y="357.7" font-size="10" font-weight="normal" fill="#000" text-anchor="middle" font-family="'Liberation Serif',serif" letter-spacing="0.4" stroke="#000" stroke-width="0.25">Trade</text>
<text x="57.5" y="365.3" font-size="10" font-weight="normal" fill="#000" text-anchor="middle" font-family="'Liberation Serif',serif" textLength="27" lengthAdjust="spacingAndGlyphs" letter-spacing="0.4" stroke="#000" stroke-width="0.25">Profile</text>
<rect x="42" y="370" width="31" height="22" fill="url(#hatch)" />
<rect x="42" y="370" width="30" height="1" fill="#404040"/>
<rect x="42" y="370" width="1" height="21" fill="#404040"/>
<rect x="43" y="371" width="28" height="1" fill="#808080"/>
<rect x="43" y="371" width="1" height="19" fill="#808080"/>
<rect x="42" y="391" width="31" height="1" fill="#fff"/>
<rect x="72" y="370" width="1" height="22" fill="#fff"/>
<text x="46.5" y="386" font-size="14" font-weight="normal" fill="#00f" text-anchor="start" font-family="'Liberation Serif',serif" >X</text>
<text x="55" y="386" font-size="14" font-weight="normal" fill="#000" text-anchor="start" font-family="'Liberation Serif',serif" >T</text>
<text x="63.5" y="386" font-size="14" font-weight="normal" fill="#f00" text-anchor="start" font-family="'Liberation Serif',serif" >L</text>
<rect x="77" y="75" width="1173" height="19" fill="#fff" />
<rect x="77" y="75" width="1172" height="1" fill="#000"/>
<rect x="77" y="75" width="1" height="18" fill="#000"/>
<rect x="78" y="76" width="1171" height="16" fill="#ffffe1" />
<rect x="78" y="92" width="1171" height="1" fill="#d4d0c8"/>
<text x="82.3" y="89" font-size="14" font-weight="bold" fill="#000" text-anchor="start" font-family="'Liberation Sans',sans-serif" textLength="49.0" lengthAdjust="spacingAndGlyphs" >05/12/23</text>
<text x="494" y="89" font-size="14" font-weight="bold" fill="#000" text-anchor="start" font-family="'Liberation Sans',sans-serif" textLength="63.0" lengthAdjust="spacingAndGlyphs" >O: 4138.54</text>
<text x="570" y="89" font-size="14" font-weight="bold" fill="#00f" text-anchor="start" font-family="'Liberation Sans',sans-serif" textLength="13.3" lengthAdjust="spacingAndGlyphs" >H:</text>
<text x="587.5" y="89" font-size="14" font-weight="bold" fill="#000" text-anchor="start" font-family="'Liberation Sans',sans-serif" textLength="45.5" lengthAdjust="spacingAndGlyphs" >4143.74</text>
<text x="645" y="89" font-size="14" font-weight="bold" fill="#f00" text-anchor="start" font-family="'Liberation Sans',sans-serif" textLength="11.9" lengthAdjust="spacingAndGlyphs" >L:</text>
<text x="663" y="89" font-size="14" font-weight="bold" fill="#000" text-anchor="start" font-family="'Liberation Sans',sans-serif" textLength="45.5" lengthAdjust="spacingAndGlyphs" >4099.12</text>
<text x="721" y="89" font-size="14" font-weight="bold" fill="#000" text-anchor="start" font-family="'Liberation Sans',sans-serif" textLength="62.3" lengthAdjust="spacingAndGlyphs" >C: 4124.08</text>
<text x="1245" y="89" font-size="14" font-weight="bold" fill="#f00" text-anchor="end" font-family="'Liberation Sans',sans-serif" textLength="28.7" lengthAdjust="spacingAndGlyphs" >-6.54</text>
<rect x="1251" y="80" width="1" height="884" fill="#fff"/>
<rect x="1251" y="80" width="29" height="1" fill="#fff"/>
<rect x="1254" y="88" width="22" height="21" fill="url(#hatch)" />
<rect x="1254" y="88" width="21" height="1" fill="#404040"/>
<rect x="1254" y="88" width="1" height="20" fill="#404040"/>
<rect x="1255" y="89" width="19" height="1" fill="#808080"/>
<rect x="1255" y="89" width="1" height="18" fill="#808080"/>
<rect x="1254" y="108" width="22" height="1" fill="#fff"/>
<rect x="1275" y="88" width="1" height="21" fill="#fff"/>
<rect x="1254" y="110" width="22" height="21" fill="#d4d0c8" />
<rect x="1254" y="110" width="21" height="1" fill="#fff"/>
<rect x="1254" y="110" width="1" height="20" fill="#fff"/>
<rect x="1254" y="130" width="22" height="1" fill="#404040"/>
<rect x="1275" y="110" width="1" height="21" fill="#404040"/>
<rect x="1255" y="129" width="20" height="1" fill="#808080"/>
<rect x="1274" y="111" width="1" height="19" fill="#808080"/>
<rect x="1254" y="132" width="22" height="21" fill="#d4d0c8" />
<rect x="1254" y="132" width="21" height="1" fill="#fff"/>
<rect x="1254" y="132" width="1" height="20" fill="#fff"/>
<rect x="1254" y="152" width="22" height="1" fill="#404040"/>
<rect x="1275" y="132" width="1" height="21" fill="#404040"/>
<rect x="1255" y="151" width="20" height="1" fill="#808080"/>
<rect x="1274" y="133" width="1" height="19" fill="#808080"/>
<rect x="1254" y="154" width="22" height="21" fill="#d4d0c8" />
<rect x="1254" y="154" width="21" height="1" fill="#fff"/>
<rect x="1254" y="154" width="1" height="20" fill="#fff"/>
<rect x="1254" y="174" width="22" height="1" fill="#404040"/>
<rect x="1275" y="154" width="1" height="21" fill="#404040"/>
<rect x="1255" y="173" width="20" height="1" fill="#808080"/>
<rect x="1274" y="155" width="1" height="19" fill="#808080"/>
<rect x="1254" y="176" width="22" height="21" fill="#d4d0c8" />
<rect x="1254" y="176" width="21" height="1" fill="#fff"/>
<rect x="1254" y="176" width="1" height="20" fill="#fff"/>
<rect x="1254" y="196" width="22" height="1" fill="#404040"/>
<rect x="1275" y="176" width="1" height="21" fill="#404040"/>
<rect x="1255" y="195" width="20" height="1" fill="#808080"/>
<rect x="1274" y="177" width="1" height="19" fill="#808080"/>
<rect x="1254" y="198" width="22" height="21" fill="#d4d0c8" />
<rect x="1254" y="198" width="21" height="1" fill="#fff"/>
<rect x="1254" y="198" width="1" height="20" fill="#fff"/>
<rect x="1254" y="218" width="22" height="1" fill="#404040"/>
<rect x="1275" y="198" width="1" height="21" fill="#404040"/>
<rect x="1255" y="217" width="20" height="1" fill="#808080"/>
<rect x="1274" y="199" width="1" height="19" fill="#808080"/>
<rect x="1254" y="220" width="22" height="21" fill="#d4d0c8" />
<rect x="1254" y="220" width="21" height="1" fill="#fff"/>
<rect x="1254" y="220" width="1" height="20" fill="#fff"/>
<rect x="1254" y="240" width="22" height="1" fill="#404040"/>
<rect x="1275" y="220" width="1" height="21" fill="#404040"/>
<rect x="1255" y="239" width="20" height="1" fill="#808080"/>
<rect x="1274" y="221" width="1" height="19" fill="#808080"/>
<rect x="1254" y="242" width="22" height="21" fill="#d4d0c8" />
<rect x="1254" y="242" width="21" height="1" fill="#fff"/>
<rect x="1254" y="242" width="1" height="20" fill="#fff"/>
<rect x="1254" y="262" width="22" height="1" fill="#404040"/>
<rect x="1275" y="242" width="1" height="21" fill="#404040"/>
<rect x="1255" y="261" width="20" height="1" fill="#808080"/>
<rect x="1274" y="243" width="1" height="19" fill="#808080"/>
<rect x="1254" y="264" width="22" height="21" fill="#d4d0c8" />
<rect x="1254" y="264" width="21" height="1" fill="#fff"/>
<rect x="1254" y="264" width="1" height="20" fill="#fff"/>
<rect x="1254" y="284" width="22" height="1" fill="#404040"/>
<rect x="1275" y="264" width="1" height="21" fill="#404040"/>
<rect x="1255" y="283" width="20" height="1" fill="#808080"/>
<rect x="1274" y="265" width="1" height="19" fill="#808080"/>
<rect x="1254" y="286" width="22" height="21" fill="#d4d0c8" />
<rect x="1254" y="286" width="21" height="1" fill="#fff"/>
<rect x="1254" y="286" width="1" height="20" fill="#fff"/>
<rect x="1254" y="306" width="22" height="1" fill="#404040"/>
<rect x="1275" y="286" width="1" height="21" fill="#404040"/>
<rect x="1255" y="305" width="20" height="1" fill="#808080"/>
<rect x="1274" y="287" width="1" height="19" fill="#808080"/>
<rect x="1254" y="308" width="22" height="21" fill="#d4d0c8" />
<rect x="1254" y="308" width="21" height="1" fill="#fff"/>
<rect x="1254" y="308" width="1" height="20" fill="#fff"/>
<rect x="1254" y="328" width="22" height="1" fill="#404040"/>
<rect x="1275" y="308" width="1" height="21" fill="#404040"/>
<rect x="1255" y="327" width="20" height="1" fill="#808080"/>
<rect x="1274" y="309" width="1" height="19" fill="#808080"/>
<rect x="1254" y="330" width="22" height="21" fill="#d4d0c8" />
<rect x="1254" y="330" width="21" height="1" fill="#fff"/>
<rect x="1254" y="330" width="1" height="20" fill="#fff"/>
<rect x="1254" y="350" width="22" height="1" fill="#404040"/>
<rect x="1275" y="330" width="1" height="21" fill="#404040"/>
<rect x="1255" y="349" width="20" height="1" fill="#808080"/>
<rect x="1274" y="331" width="1" height="19" fill="#808080"/>
<rect x="1254" y="352" width="22" height="21" fill="#d4d0c8" />
<rect x="1254" y="352" width="21" height="1" fill="#fff"/>
<rect x="1254" y="352" width="1" height="20" fill="#fff"/>
<rect x="1254" y="372" width="22" height="1" fill="#404040"/>
<rect x="1275" y="352" width="1" height="21" fill="#404040"/>
<rect x="1255" y="371" width="20" height="1" fill="#808080"/>
<rect x="1274" y="353" width="1" height="19" fill="#808080"/>
<rect x="1254" y="374" width="22" height="21" fill="#d4d0c8" />
<rect x="1254" y="374" width="21" height="1" fill="#fff"/>
<rect x="1254" y="374" width="1" height="20" fill="#fff"/>
<rect x="1254" y="394" width="22" height="1" fill="#404040"/>
<rect x="1275" y="374" width="1" height="21" fill="#404040"/>
<rect x="1255" y="393" width="20" height="1" fill="#808080"/>
<rect x="1274" y="375" width="1" height="19" fill="#808080"/>
<rect x="1254" y="396" width="22" height="21" fill="#d4d0c8" />
<rect x="1254" y="396" width="21" height="1" fill="#fff"/>
<rect x="1254" y="396" width="1" height="20" fill="#fff"/>
<rect x="1254" y="416" width="22" height="1" fill="#404040"/>
<rect x="1275" y="396" width="1" height="21" fill="#404040"/>
<rect x="1255" y="415" width="20" height="1" fill="#808080"/>
<rect x="1274" y="397" width="1" height="19" fill="#808080"/>
<rect x="1254" y="418" width="22" height="21" fill="#d4d0c8" />
<rect x="1254" y="418" width="21" height="1" fill="#fff"/>
<rect x="1254" y="418" width="1" height="20" fill="#fff"/>
<rect x="1254" y="438" width="22" height="1" fill="#404040"/>
<rect x="1275" y="418" width="1" height="21" fill="#404040"/>
<rect x="1255" y="437" width="20" height="1" fill="#808080"/>
<rect x="1274" y="419" width="1" height="19" fill="#808080"/>
<rect x="1254" y="440" width="22" height="21" fill="#d4d0c8" />
<rect x="1254" y="440" width="21" height="1" fill="#fff"/>
<rect x="1254" y="440" width="1" height="20" fill="#fff"/>
<rect x="1254" y="460" width="22" height="1" fill="#404040"/>
<rect x="1275" y="440" width="1" height="21" fill="#404040"/>
<rect x="1255" y="459" width="20" height="1" fill="#808080"/>
<rect x="1274" y="441" width="1" height="19" fill="#808080"/>
<rect x="1254" y="467" width="22" height="21" fill="#d4d0c8" />
<rect x="1254" y="467" width="21" height="1" fill="#fff"/>
<rect x="1254" y="467" width="1" height="20" fill="#fff"/>
<rect x="1254" y="487" width="22" height="1" fill="#404040"/>
<rect x="1275" y="467" width="1" height="21" fill="#404040"/>
<rect x="1255" y="486" width="20" height="1" fill="#808080"/>
<rect x="1274" y="468" width="1" height="19" fill="#808080"/>
<rect x="1254" y="489" width="22" height="21" fill="#d4d0c8" />
<rect x="1254" y="489" width="21" height="1" fill="#fff"/>
<rect x="1254" y="489" width="1" height="20" fill="#fff"/>
<rect x="1254" y="509" width="22" height="1" fill="#404040"/>
<rect x="1275" y="489" width="1" height="21" fill="#404040"/>
<rect x="1255" y="508" width="20" height="1" fill="#808080"/>
<rect x="1274" y="490" width="1" height="19" fill="#808080"/>
<rect x="1254" y="511" width="22" height="21" fill="#d4d0c8" />
<rect x="1254" y="511" width="21" height="1" fill="#fff"/>
<rect x="1254" y="511" width="1" height="20" fill="#fff"/>
<rect x="1254" y="531" width="22" height="1" fill="#404040"/>
<rect x="1275" y="511" width="1" height="21" fill="#404040"/>
<rect x="1255" y="530" width="20" height="1" fill="#808080"/>
<rect x="1274" y="512" width="1" height="19" fill="#808080"/>
<rect x="1254" y="538" width="22" height="21" fill="url(#hatch)" />
<rect x="1254" y="538" width="21" height="1" fill="#404040"/>
<rect x="1254" y="538" width="1" height="20" fill="#404040"/>
<rect x="1255" y="539" width="19" height="1" fill="#808080"/>
<rect x="1255" y="539" width="1" height="18" fill="#808080"/>
<rect x="1254" y="558" width="22" height="1" fill="#fff"/>
<rect x="1275" y="538" width="1" height="21" fill="#fff"/>
<rect x="1252" y="566" width="28" height="1" fill="#808080"/>
<rect x="1252" y="567" width="28" height="1" fill="#fff"/>
<path d="M1258,92l14,13M1272,92l-14,13" stroke="#000" stroke-width="2"/>
<path d="M1259,114l3,-1l11,11l-3,3l-11,-11z" fill="#ff0" stroke="#000" stroke-width="1"/><circle cx="1271.500" cy="125.500" r="1.800" fill="#800000"/><path d="M1258.500,113.500l3,-1l-2,3z" fill="#000"/>
<path d="M1257,144l16,-8" stroke="#00f"/><path d="M1257,147l16,-8" stroke="#000"/><path d="M1257,150l16,-8" stroke="#f00"/>
<text x="1265" y="164" font-size="9.5" font-weight="normal" fill="#000" text-anchor="middle" font-family="'Liberation Sans',sans-serif" textLength="12" lengthAdjust="spacingAndGlyphs" stroke="#000" stroke-width="0.3">FIB</text>
<text x="1265" y="172.5" font-size="9.5" font-weight="normal" fill="#000" text-anchor="middle" font-family="'Liberation Sans',sans-serif" textLength="14" lengthAdjust="spacingAndGlyphs" stroke="#000" stroke-width="0.3">RET</text>
<text x="1265" y="186" font-size="9.5" font-weight="normal" fill="#000" text-anchor="middle" font-family="'Liberation Sans',sans-serif" textLength="12" lengthAdjust="spacingAndGlyphs" stroke="#000" stroke-width="0.3">FIB</text>
<text x="1265" y="194.5" font-size="9.5" font-weight="normal" fill="#000" text-anchor="middle" font-family="'Liberation Sans',sans-serif" textLength="14" lengthAdjust="spacingAndGlyphs" stroke="#000" stroke-width="0.3">EXT</text>
<text x="1265" y="208" font-size="9.5" font-weight="normal" fill="#000" text-anchor="middle" font-family="'Liberation Sans',sans-serif" textLength="12" lengthAdjust="spacingAndGlyphs" stroke="#000" stroke-width="0.3">FIB</text>
<text x="1265" y="216.5" font-size="9.5" font-weight="normal" fill="#000" text-anchor="middle" font-family="'Liberation Sans',sans-serif" textLength="17" lengthAdjust="spacingAndGlyphs" stroke="#000" stroke-width="0.3">TIME</text>
<path d="M1258,236a7,7 0 0 1 14,0" fill="none" stroke="#f00" stroke-width="1.300"/><path d="M1260.500,236a4.500,4.500 0 0 1 9,0" fill="none" stroke="#00f" stroke-width="1"/>
<text x="1265" y="239" font-size="7.5" font-weight="bold" fill="#000" text-anchor="middle" font-family="'Liberation Sans',sans-serif" textLength="12" lengthAdjust="spacingAndGlyphs" >FIB</text>
<path d="M1257,253h16" stroke="#000"/><path d="M1257,253l15,-8" stroke="#00f"/><path d="M1257,253l15,-4M1257,253l15,4" stroke="#f00"/><path d="M1257,253l15,8" stroke="#00f"/><path d="M1257,253l5,-5" stroke="#008000"/>
<rect x="1258.500" y="268.500" width="13" height="12" fill="#c0c0c0" stroke="#000"/><path d="M1262,268v13M1265,268v13M1268,268v13M1258,272h14M1258,275h14M1258,278h14" stroke="#606060" stroke-width="0.700"/>
<ellipse cx="1265" cy="293" rx="7" ry="3.500" fill="#0ff" stroke="#f00" stroke-width="1.200"/>
<text x="1265" y="304.5" font-size="7" font-weight="bold" fill="#000" text-anchor="middle" font-family="'Liberation Sans',sans-serif" textLength="18" lengthAdjust="spacingAndGlyphs" >ELIPS</text>
<path d="M1258,322l12,-10M1261,325l12,-10" stroke="#008080"/><path d="M1260,314l10,9M1263,311l10,9" stroke="#00f"/>
<text x="1265" y="346" font-size="11.5" font-weight="bold" fill="#000" text-anchor="middle" font-family="'Liberation Sans',sans-serif" textLength="19" lengthAdjust="spacingAndGlyphs" >PTI</text>
<rect x="1258.500" y="356.500" width="13" height="12" fill="#fff" stroke="#00f" stroke-width="1.400"/><path d="M1263,356v13M1267,356v13M1258,360.500h14M1258,364.500h14" stroke="#00f" stroke-width="1.200"/>
<rect x="1258" y="376" width="14" height="3" fill="#f0f" />
<rect x="1258" y="379" width="14" height="3" fill="#0ff" />
<text x="1265" y="391.5" font-size="9" font-weight="normal" fill="#000" text-anchor="middle" font-family="'Liberation Sans',sans-serif" textLength="16" lengthAdjust="spacingAndGlyphs" stroke="#000" stroke-width="0.3">MOB</text>
<circle cx="1268" cy="405" r="4.500" fill="#fff" stroke="#000"/><path d="M1264,409l-6,5" stroke="#000" stroke-width="1.500"/>
<text x="1268" y="408.5" font-size="8" font-weight="bold" fill="#008000" text-anchor="middle" font-family="'Liberation Sans',sans-serif" >1</text>
<text x="1265" y="434" font-size="15" font-weight="bold" fill="#000" text-anchor="middle" font-family="'Liberation Serif',serif" >A</text>
<circle cx="1263.500" cy="448.500" r="4.500" fill="#fff" stroke="#000" stroke-width="1.200"/><path d="M1267,452l6,6" stroke="#000" stroke-width="2"/><path d="M1261.500,448.500h4M1263.500,446.500v4" stroke="#000" stroke-width="0.800"/>
<path d="M1259,474l4,-3l4,3.500l-4,3.500z" fill="#800000"/><path d="M1263,478l4,-3.500l4,3.500l-4,3.500z" fill="#fff" stroke="#808080" stroke-width="0.500"/><path d="M1267,481.500l4,-3.500l2.500,3l-3,3.500z" fill="#ff0" stroke="#000" stroke-width="0.500"/>
<rect x="1258" y="493" width="14" height="13" fill="#fff"/><path d="M1259,494l5,4.500M1271,494l-5,4.500M1259,505l5,-4.500M1271,505l-5,-4.500M1265,493.500v3M1265,502.500v3M1258.500,499.500h3M1268.500,499.500h3" stroke="#000" stroke-width="1"/><path d="M1258.500,496v-2.500h2.500M1269,493.500h2.500v2.500M1258.500,503v2.500h2.500M1269,505.500h2.500v-2.500" stroke="#000" fill="none"/>
<rect x="1258.500" y="514.500" width="7" height="10" fill="#fff" stroke="#000"/><rect x="1264.500" y="516.500" width="7" height="10" fill="#fff" stroke="#000"/><path d="M1260,518l4,-1M1260,520l4,-1M1260,522l4,-1M1266,520l4,-1M1266,522l4,-1M1266,524l4,-1" stroke="#000" stroke-width="0.800"/>
<path d="M1260,541v8a5.500,5.500 0 0 0 11,0v-8h-3.500v8a2,2 0 0 1 -4,0v-8z" fill="#e00000"/>
<rect x="0" y="964" width="1280" height="1" fill="#fff"/>
<text x="3" y="980" font-size="11.7" font-weight="normal" fill="#000" text-anchor="start" font-family="'Liberation Sans',sans-serif" textLength="91" lengthAdjust="spacingAndGlyphs" >For Help, press F1</text>
<rect x="953" y="966" width="325" height="17" fill="#d4d0c8" />
<rect x="953" y="966" width="325" height="1" fill="#808080"/>
<rect x="953" y="966" width="1" height="17" fill="#808080"/>
<rect x="1277" y="966" width="1" height="17" fill="#fff"/>
<text x="957" y="980" font-size="11.7" font-weight="normal" fill="#000" text-anchor="start" font-family="'Liberation Sans',sans-serif" textLength="134" lengthAdjust="spacingAndGlyphs" >Page: 14 - SP 500 for blog</text>
<rect x="77" y="97" width="1172" height="1" fill="#000" />
<rect x="77" y="97" width="1" height="652" fill="#000" />
<rect x="78" y="98" width="1110" height="651" fill="#fff" />
<rect x="1188" y="97" width="61" height="652" fill="#000" />
<rect x="1189" y="98" width="59" height="650" fill="#d4d0c8" />
<rect x="77" y="749" width="1174" height="3" fill="#fff"/>
<rect x="1249" y="97" width="2" height="654" fill="#fff"/>
<rect x="1189" y="725" width="7" height="1" fill="#000"/>
<text x="1197" y="729.5" font-size="12.5" font-weight="bold" fill="#000" text-anchor="start" font-family="'Liberation Sans',sans-serif" textLength="45.5" lengthAdjust="spacingAndGlyphs" >3500.00</text>
<rect x="1189" y="668" width="7" height="1" fill="#000"/>
<text x="1197" y="672.5" font-size="12.5" font-weight="bold" fill="#000" text-anchor="start" font-family="'Liberation Sans',sans-serif" textLength="45.5" lengthAdjust="spacingAndGlyphs" >3600.00</text>
<rect x="1189" y="612" width="7" height="1" fill="#000"/>
<text x="1197" y="616.5" font-size="12.5" font-weight="bold" fill="#000" text-anchor="start" font-family="'Liberation Sans',sans-serif" textLength="45.5" lengthAdjust="spacingAndGlyphs" >3700.00</text>
<rect x="1189" y="555" width="7" height="1" fill="#000"/>
<text x="1197" y="559.5" font-size="12.5" font-weight="bold" fill="#000" text-anchor="start" font-family="'Liberation Sans',sans-serif" textLength="45.5" lengthAdjust="spacingAndGlyphs" >3800.00</text>
<rect x="1189" y="499" width="7" height="1" fill="#000"/>
<text x="1197" y="503.5" font-size="12.5" font-weight="bold" fill="#000" text-anchor="start" font-family="'Liberation Sans',sans-serif" textLength="45.5" lengthAdjust="spacingAndGlyphs" >3900.00</text>
<rect x="1189" y="442" width="7" height="1" fill="#000"/>
<text x="1197" y="446.5" font-size="12.5" font-weight="bold" fill="#000" text-anchor="start" font-family="'Liberation Sans',sans-serif" textLength="45.5" lengthAdjust="spacingAndGlyphs" >4000.00</text>
<rect x="1189" y="386" width="7" height="1" fill="#000"/>
<text x="1197" y="390.5" font-size="12.5" font-weight="bold" fill="#000" text-anchor="start" font-family="'Liberation Sans',sans-serif" textLength="45.5" lengthAdjust="spacingAndGlyphs" >4100.00</text>
<rect x="1189" y="329" width="7" height="1" fill="#000"/>
<text x="1197" y="333.5" font-size="12.5" font-weight="bold" fill="#000" text-anchor="start" font-family="'Liberation Sans',sans-serif" textLength="45.5" lengthAdjust="spacingAndGlyphs" >4200.00</text>
<rect x="1189" y="272" width="7" height="1" fill="#000"/>
<text x="1197" y="276.5" font-size="12.5" font-weight="bold" fill="#000" text-anchor="start" font-family="'Liberation Sans',sans-serif" textLength="45.5" lengthAdjust="spacingAndGlyphs" >4300.00</text>
<rect x="1189" y="216" width="7" height="1" fill="#000"/>
<text x="1197" y="220.5" font-size="12.5" font-weight="bold" fill="#000" text-anchor="start" font-family="'Liberation Sans',sans-serif" textLength="45.5" lengthAdjust="spacingAndGlyphs" >4400.00</text>
<rect x="1189" y="103" width="7" height="1" fill="#000"/>
<text x="1197" y="107.5" font-size="12.5" font-weight="bold" fill="#000" text-anchor="start" font-family="'Liberation Sans',sans-serif" textLength="45.5" lengthAdjust="spacingAndGlyphs" >4600.00</text>
<rect x="1190" y="742" width="1" height="1" fill="#000" />
<rect x="1190" y="736" width="1" height="1" fill="#000" />
<rect x="1190" y="731" width="1" height="1" fill="#000" />
<rect x="1190" y="719" width="1" height="1" fill="#000" />
<rect x="1190" y="714" width="1" height="1" fill="#000" />
<rect x="1190" y="708" width="1" height="1" fill="#000" />
<rect x="1190" y="702" width="1" height="1" fill="#000" />
<rect x="1189" y="697" width="4" height="1" fill="#000"/>
<rect x="1190" y="691" width="1" height="1" fill="#000" />
<rect x="1190" y="685" width="1" height="1" fill="#000" />
<rect x="1190" y="680" width="1" height="1" fill="#000" />
<rect x="1190" y="674" width="1" height="1" fill="#000" />
<rect x="1190" y="663" width="1" height="1" fill="#000" />
<rect x="1190" y="657" width="1" height="1" fill="#000" />
<rect x="1190" y="651" width="1" height="1" fill="#000" />
<rect x="1190" y="646" width="1" height="1" fill="#000" />
<rect x="1189" y="640" width="4" height="1" fill="#000"/>
<rect x="1190" y="634" width="1" height="1" fill="#000" />
<rect x="1190" y="629" width="1" height="1" fill="#000" />
<rect x="1190" y="623" width="1" height="1" fill="#000" />
<rect x="1190" y="617" width="1" height="1" fill="#000" />
<rect x="1190" y="606" width="1" height="1" fill="#000" />
<rect x="1190" y="600" width="1" height="1" fill="#000" />
<rect x="1190" y="595" width="1" height="1" fill="#000" />
<rect x="1190" y="589" width="1" height="1" fill="#000" />
<rect x="1189" y="584" width="4" height="1" fill="#000"/>
<rect x="1190" y="578" width="1" height="1" fill="#000" />
<rect x="1190" y="572" width="1" height="1" fill="#000" />
<rect x="1190" y="567" width="1" height="1" fill="#000" />
<rect x="1190" y="561" width="1" height="1" fill="#000" />
<rect x="1190" y="550" width="1" height="1" fill="#000" />
<rect x="1190" y="544" width="1" height="1" fill="#000" />
<rect x="1190" y="538" width="1" height="1" fill="#000" />
<rect x="1190" y="533" width="1" height="1" fill="#000" />
<rect x="1189" y="527" width="4" height="1" fill="#000"/>
<rect x="1190" y="521" width="1" height="1" fill="#000" />
<rect x="1190" y="516" width="1" height="1" fill="#000" />
<rect x="1190" y="510" width="1" height="1" fill="#000" />
<rect x="1190" y="504" width="1" height="1" fill="#000" />
<rect x="1190" y="493" width="1" height="1" fill="#000" />
<rect x="1190" y="487" width="1" height="1" fill="#000" />
<rect x="1190" y="482" width="1" height="1" fill="#000" />
<rect x="1190" y="476" width="1" height="1" fill="#000" />
<rect x="1189" y="470" width="4" height="1" fill="#000"/>
<rect x="1190" y="465" width="1" height="1" fill="#000" />
<rect x="1190" y="459" width="1" height="1" fill="#000" />
<rect x="1190" y="453" width="1" height="1" fill="#000" />
<rect x="1190" y="448" width="1" height="1" fill="#000" />
<rect x="1190" y="436" width="1" height="1" fill="#000" />
<rect x="1190" y="431" width="1" height="1" fill="#000" />
<rect x="1190" y="425" width="1" height="1" fill="#000" />
<rect x="1190" y="420" width="1" height="1" fill="#000" />
<rect x="1189" y="414" width="4" height="1" fill="#000"/>
<rect x="1190" y="408" width="1" height="1" fill="#000" />
<rect x="1190" y="403" width="1" height="1" fill="#000" />
<rect x="1190" y="397" width="1" height="1" fill="#000" />
<rect x="1190" y="391" width="1" height="1" fill="#000" />
<rect x="1190" y="380" width="1" height="1" fill="#000" />
<rect x="1190" y="374" width="1" height="1" fill="#000" />
<rect x="1190" y="369" width="1" height="1" fill="#000" />
<rect x="1190" y="363" width="1" height="1" fill="#000" />
<rect x="1189" y="357" width="4" height="1" fill="#000"/>
<rect x="1190" y="352" width="1" height="1" fill="#000" />
<rect x="1190" y="346" width="1" height="1" fill="#000" />
<rect x="1190" y="340" width="1" height="1" fill="#000" />
<rect x="1190" y="335" width="1" height="1" fill="#000" />
<rect x="1190" y="323" width="1" height="1" fill="#000" />
<rect x="1190" y="318" width="1" height="1" fill="#000" />
<rect x="1190" y="312" width="1" height="1" fill="#000" />
<rect x="1190" y="306" width="1" height="1" fill="#000" />
<rect x="1189" y="301" width="4" height="1" fill="#000"/>
<rect x="1190" y="295" width="1" height="1" fill="#000" />
<rect x="1190" y="289" width="1" height="1" fill="#000" />
<rect x="1190" y="284" width="1" height="1" fill="#000" />
<rect x="1190" y="278" width="1" height="1" fill="#000" />
<rect x="1190" y="267" width="1" height="1" fill="#000" />
<rect x="1190" y="261" width="1" height="1" fill="#000" />
<rect x="1190" y="255" width="1" height="1" fill="#000" />
<rect x="1190" y="250" width="1" height="1" fill="#000" />
<rect x="1189" y="244" width="4" height="1" fill="#000"/>
<rect x="1190" y="239" width="1" height="1" fill="#000" />
<rect x="1190" y="233" width="1" height="1" fill="#000" />
<rect x="1190" y="227" width="1" height="1" fill="#000" />
<rect x="1190" y="222" width="1" height="1" fill="#000" />
<rect x="1190" y="210" width="1" height="1" fill="#000" />
<rect x="1190" y="205" width="1" height="1" fill="#000" />
<rect x="1190" y="199" width="1" height="1" fill="#000" />
<rect x="1190" y="193" width="1" height="1" fill="#000" />
<rect x="1189" y="188" width="4" height="1" fill="#000"/>
<rect x="1190" y="182" width="1" height="1" fill="#000" />
<rect x="1190" y="176" width="1" height="1" fill="#000" />
<rect x="1190" y="171" width="1" height="1" fill="#000" />
<rect x="1190" y="165" width="1" height="1" fill="#000" />
<rect x="1190" y="142" width="1" height="1" fill="#000" />
<rect x="1190" y="137" width="1" height="1" fill="#000" />
<rect x="1189" y="131" width="4" height="1" fill="#000"/>
<rect x="1190" y="125" width="1" height="1" fill="#000" />
<rect x="1190" y="120" width="1" height="1" fill="#000" />
<rect x="1190" y="114" width="1" height="1" fill="#000" />
<rect x="1190" y="108" width="1" height="1" fill="#000" />
<text x="1197" y="165" font-size="12.5" font-weight="bold" fill="#000" text-anchor="start" font-family="'Liberation Sans',sans-serif" textLength="45.5" lengthAdjust="spacingAndGlyphs" >4500.00</text>
<rect x="1189" y="148" width="59" height="16" fill="#000" />
<rect x="1189" y="149" width="59" height="14" fill="#ffffe1" />
<text x="1218.5" y="160.5" font-size="13" font-weight="bold" fill="#000" text-anchor="middle" font-family="'Liberation Sans',sans-serif" textLength="47" lengthAdjust="spacingAndGlyphs" >4507.57</text>
<rect x="1224" y="732" width="24" height="16" fill="#000" />
<rect x="1225" y="733" width="23" height="15" fill="#c8c8c8" />
<rect x="1226" y="734" width="5" height="5" fill="#808080" />
<path d="M1228,737q4,-3 9,0q5,-3 9,0" fill="none" stroke="#000" stroke-width="0.800"/><path d="M1230.500,737l-3,7.500h6zM1243.500,737l-3,7.500h6z" fill="#fff" stroke="#000" stroke-width="0.800"/><rect x="1228" y="744" width="5" height="1.500" fill="#ff0"/><rect x="1241" y="744" width="5" height="1.500" fill="#ff0"/><rect x="1236" y="739" width="2" height="8" fill="#ff0" stroke="#000" stroke-width="0.500"/><path d="M1233,737l4,3l4,-3" fill="none" stroke="#ff0" stroke-width="1.200"/>
<g clip-path="url(#cmain)">
<rect x="79" y="232" width="44" height="1" fill="#c0c0c0"/>
<rect x="79" y="238" width="44" height="1" fill="#c0c0c0"/>
<rect x="79" y="244" width="44" height="1" fill="#c0c0c0"/>
<rect x="79" y="249" width="44" height="2" fill="#808080"/>
<rect x="79" y="256" width="44" height="1" fill="#808080"/>
<rect x="79" y="260" width="44" height="1" fill="#808080"/>
<rect x="79" y="264" width="44" height="1" fill="#c0c0c0"/>
<rect x="101" y="268" width="22" height="1" fill="#c0c0c0"/>
<rect x="129" y="234" width="267" height="1" fill="#c0c0c0"/>
<rect x="129" y="239" width="211" height="1" fill="#c0c0c0"/>
<rect x="129" y="244" width="204" height="1" fill="#c0c0c0"/>
<rect x="129" y="248" width="155" height="2" fill="#808080"/>
<rect x="129" y="255" width="127" height="1" fill="#808080"/>
<rect x="129" y="260" width="71" height="1" fill="#808080"/>
<rect x="129" y="265" width="64" height="1" fill="#c0c0c0"/>
<rect x="129" y="269" width="22" height="1" fill="#c0c0c0"/>
<rect x="121" y="270" width="2" height="35" fill="#808080"/>
<rect x="79" y="287" width="9" height="1" fill="#c0c0c0"/>
<rect x="101" y="325" width="43" height="1" fill="#c0c0c0"/>
<rect x="101" y="329" width="36" height="1" fill="#c0c0c0"/>
<rect x="79" y="327" width="23" height="1" fill="#c0c0c0"/>
<rect x="79" y="331" width="22" height="1" fill="#c0c0c0"/>
<rect x="100" y="331" width="2" height="35" fill="#808080"/>
<rect x="213" y="193" width="253" height="1" fill="#c0c0c0"/>
<rect x="269" y="200" width="197" height="1" fill="#808080"/>
<rect x="297" y="206" width="169" height="1" fill="#808080"/>
<rect x="318" y="212" width="148" height="1" fill="#c0c0c0"/>
<rect x="325" y="218" width="141" height="1" fill="#c0c0c0"/>
<rect x="360" y="224" width="106" height="1" fill="#808080"/>
<rect x="402" y="230" width="64" height="1" fill="#c0c0c0"/>
<rect x="444" y="234" width="22" height="1" fill="#808080"/>
<rect x="472" y="193" width="253" height="1" fill="#c0c0c0"/>
<rect x="472" y="200" width="197" height="1" fill="#808080"/>
<rect x="472" y="206" width="169" height="1" fill="#808080"/>
<rect x="472" y="212" width="148" height="1" fill="#c0c0c0"/>
<rect x="472" y="218" width="141" height="1" fill="#c0c0c0"/>
<rect x="472" y="223" width="106" height="1" fill="#808080"/>
<rect x="472" y="229" width="64" height="1" fill="#c0c0c0"/>
<rect x="472" y="235" width="22" height="1" fill="#808080"/>
<rect x="472" y="239" width="8" height="1" fill="#c0c0c0"/>
<rect x="459" y="240" width="6" height="1" fill="#c0c0c0"/>
<rect x="464" y="240" width="2" height="35" fill="#808080"/>
<rect x="388" y="596" width="28" height="1" fill="#808080"/>
<rect x="402" y="602" width="14" height="1" fill="#808080"/>
<rect x="423" y="593" width="29" height="1" fill="#808080"/>
<rect x="423" y="599" width="15" height="1" fill="#808080"/>
<rect x="415" y="603" width="2" height="35" fill="#808080"/>
<rect x="654" y="503" width="35" height="1" fill="#c0c0c0"/>
<rect x="661" y="509" width="28" height="1" fill="#808080"/>
<rect x="682" y="514" width="7" height="1" fill="#808080"/>
<rect x="696" y="501" width="36" height="1" fill="#c0c0c0"/>
<rect x="696" y="506" width="29" height="1" fill="#808080"/>
<rect x="696" y="511" width="8" height="1" fill="#808080"/>
<rect x="688" y="503" width="2" height="35" fill="#808080"/>
<rect x="584" y="616" width="119" height="1" fill="#c0c0c0"/>
<rect x="717" y="616" width="120" height="1" fill="#c0c0c0"/>
<rect x="619" y="622" width="84" height="1" fill="#c0c0c0"/>
<rect x="717" y="622" width="85" height="1" fill="#c0c0c0"/>
<rect x="633" y="628" width="70" height="1" fill="#c0c0c0"/>
<rect x="717" y="628" width="71" height="1" fill="#c0c0c0"/>
<rect x="661" y="634" width="42" height="1" fill="#c0c0c0"/>
<rect x="717" y="634" width="42" height="1" fill="#c0c0c0"/>
<rect x="682" y="639" width="21" height="1" fill="#c0c0c0"/>
<rect x="717" y="639" width="21" height="1" fill="#c0c0c0"/>
<rect x="709" y="636" width="2" height="34" fill="#808080"/>
<path d="M101.0,460.2L101.0,485.3M91.5,464.3L101.0,484.8L110.5,464.3" fill="none" stroke="#f00" stroke-width="2" stroke-linejoin="miter" shape-rendering="crispEdges"/>
<path d="M121.9,445.4L121.9,470.4M112.4,449.4L121.9,469.9L131.4,449.4" fill="none" stroke="#f00" stroke-width="2" stroke-linejoin="miter" shape-rendering="crispEdges"/>
<path d="M157.0,469.2L157.0,494.7M147.5,473.7L157.0,494.2L166.5,473.7" fill="none" stroke="#f00" stroke-width="2" stroke-linejoin="miter" shape-rendering="crispEdges"/>
<path d="M367.1,340.3L367.1,365.4M357.6,344.4L367.1,364.9L376.6,344.4" fill="none" stroke="#f00" stroke-width="2" stroke-linejoin="miter" shape-rendering="crispEdges"/>
<path d="M444.2,369.3L444.2,394.3M434.7,373.3L444.2,393.8L453.7,373.3" fill="none" stroke="#f00" stroke-width="2" stroke-linejoin="miter" shape-rendering="crispEdges"/>
<path d="M457.9,388.0L457.9,413.1M448.4,392.1L457.9,412.6L467.4,392.1" fill="none" stroke="#f00" stroke-width="2" stroke-linejoin="miter" shape-rendering="crispEdges"/>
<path d="M682.1,328.9L682.1,354.0M672.6,333.0L682.1,353.5L691.6,333.0" fill="none" stroke="#f00" stroke-width="2" stroke-linejoin="miter" shape-rendering="crispEdges"/>
<path d="M723.6,315.1L723.6,339.9M714.1,318.9L723.6,339.4L733.1,318.9" fill="none" stroke="#f00" stroke-width="2" stroke-linejoin="miter" shape-rendering="crispEdges"/>
<path d="M486.4,415.7L486.4,441.5M479.9,427.0L486.4,439.5L492.9,427.0" fill="none" stroke="#f00" stroke-width="1" stroke-linejoin="miter" shape-rendering="crispEdges"/>
<path d="M528.5,386.2L528.5,411.2M522.0,396.7L528.5,409.2L535.0,396.7" fill="none" stroke="#f00" stroke-width="1" stroke-linejoin="miter" shape-rendering="crispEdges"/>
<path d="M535.6,411.7L535.6,436.0M529.1,421.5L535.6,434.0L542.1,421.5" fill="none" stroke="#f00" stroke-width="1" stroke-linejoin="miter" shape-rendering="crispEdges"/>
<path d="M717.3,269.4L717.3,293.7M710.8,279.2L717.3,291.7L723.8,279.2" fill="none" stroke="#f00" stroke-width="1" stroke-linejoin="miter" shape-rendering="crispEdges"/>
<path d="M213.0,383.5L213.0,408.6M203.5,387.6L213.0,408.1L222.5,387.6" fill="none" stroke="#808080" stroke-width="2" stroke-linejoin="miter" shape-rendering="crispEdges"/>
<path d="M268.7,356.6L268.7,381.8M259.2,360.8L268.7,381.3L278.2,360.8" fill="none" stroke="#808080" stroke-width="2" stroke-linejoin="miter" shape-rendering="crispEdges"/>
<path d="M317.8,310.2L317.8,335.5M308.3,314.5L317.8,335.0L327.3,314.5" fill="none" stroke="#808080" stroke-width="2" stroke-linejoin="miter" shape-rendering="crispEdges"/>
<path d="M324.8,289.4L324.8,314.5M315.3,293.5L324.8,314.0L334.3,293.5" fill="none" stroke="#808080" stroke-width="2" stroke-linejoin="miter" shape-rendering="crispEdges"/>
<path d="M360.0,320.7L360.0,343.4M350.5,322.4L360.0,342.9L369.5,322.4" fill="none" stroke="#808080" stroke-width="2" stroke-linejoin="miter" shape-rendering="crispEdges"/>
<path d="M486.4,444.6L486.4,468.9M476.9,447.9L486.4,468.4L495.9,447.9" fill="none" stroke="#808080" stroke-width="2" stroke-linejoin="miter" shape-rendering="crispEdges"/>
<path d="M661.0,287.4L661.0,311.7M651.5,290.7L661.0,311.2L670.5,290.7" fill="none" stroke="#808080" stroke-width="2" stroke-linejoin="miter" shape-rendering="crispEdges"/>
<path d="M717.0,295.2L717.0,318.0M707.5,297.0L717.0,317.5L726.5,297.0" fill="none" stroke="#808080" stroke-width="2" stroke-linejoin="miter" shape-rendering="crispEdges"/>
<path d="M93.7,594.0L93.7,562.0M84.2,584.5L93.7,562.5L103.2,584.5" fill="none" stroke="#0f0" stroke-width="2" stroke-linejoin="miter" shape-rendering="crispEdges"/>
<path d="M128.9,621.6L128.9,589.5M119.4,612.0L128.9,590.0L138.4,612.0" fill="none" stroke="#0f0" stroke-width="2" stroke-linejoin="miter" shape-rendering="crispEdges"/>
<path d="M150.1,616.5L150.1,584.7M140.6,607.2L150.1,585.2L159.6,607.2" fill="none" stroke="#0f0" stroke-width="2" stroke-linejoin="miter" shape-rendering="crispEdges"/>
<path d="M163.7,610.6L163.7,579.3M154.2,601.8L163.7,579.8L173.2,601.8" fill="none" stroke="#0f0" stroke-width="2" stroke-linejoin="miter" shape-rendering="crispEdges"/>
<path d="M227.1,554.5L227.1,522.1M217.6,544.6L227.1,522.6L236.6,544.6" fill="none" stroke="#0f0" stroke-width="2" stroke-linejoin="miter" shape-rendering="crispEdges"/>
<path d="M276.0,530.8L276.0,498.7M266.5,521.2L276.0,499.2L285.5,521.2" fill="none" stroke="#0f0" stroke-width="2" stroke-linejoin="miter" shape-rendering="crispEdges"/>
<path d="M338.9,476.0L338.9,444.6M329.4,467.1L338.9,445.1L348.4,467.1" fill="none" stroke="#0f0" stroke-width="2" stroke-linejoin="miter" shape-rendering="crispEdges"/>
<path d="M423.2,536.3L423.2,504.1M413.7,526.6L423.2,504.6L432.7,526.6" fill="none" stroke="#0f0" stroke-width="2" stroke-linejoin="miter" shape-rendering="crispEdges"/>
<path d="M478.9,586.5L478.9,554.0M469.4,576.5L478.9,554.5L488.4,576.5" fill="none" stroke="#0f0" stroke-width="2" stroke-linejoin="miter" shape-rendering="crispEdges"/>
<path d="M493.0,572.8L493.0,540.4M483.5,562.9L493.0,540.9L502.5,562.9" fill="none" stroke="#0f0" stroke-width="2" stroke-linejoin="miter" shape-rendering="crispEdges"/>
<path d="M535.0,565.5L535.0,533.2M525.5,555.7L535.0,533.7L544.5,555.7" fill="none" stroke="#0f0" stroke-width="2" stroke-linejoin="miter" shape-rendering="crispEdges"/>
<path d="M695.9,462.8L695.9,430.4M686.4,452.9L695.9,430.9L705.4,452.9" fill="none" stroke="#0f0" stroke-width="2" stroke-linejoin="miter" shape-rendering="crispEdges"/>
<path d="M738.0,458.9L738.0,426.3M728.5,448.8L738.0,426.8L747.5,448.8" fill="none" stroke="#0f0" stroke-width="2" stroke-linejoin="miter" shape-rendering="crispEdges"/>
<path d="M325.6,440.0L325.6,408.4M319.1,422.9L325.6,410.4L332.1,422.9" fill="none" stroke="#0f0" stroke-width="1" stroke-linejoin="miter" shape-rendering="crispEdges"/>
<path d="M528.5,526.9L528.5,494.8M522.0,509.3L528.5,496.8L535.0,509.3" fill="none" stroke="#0f0" stroke-width="1" stroke-linejoin="miter" shape-rendering="crispEdges"/>
<path d="M724.4,433.5L724.4,401.3M717.9,415.8L724.4,403.3L730.9,415.8" fill="none" stroke="#0f0" stroke-width="1" stroke-linejoin="miter" shape-rendering="crispEdges"/>
<path d="M108.1,599.6L108.1,568.3M98.6,590.8L108.1,568.8L117.6,590.8" fill="none" stroke="#808080" stroke-width="2" stroke-linejoin="miter" shape-rendering="crispEdges"/>
<path d="M451.4,528.4L451.4,496.3M444.9,510.8L451.4,498.3L457.9,510.8" fill="none" stroke="#808080" stroke-width="1" stroke-linejoin="miter" shape-rendering="crispEdges"/>
<path d="M171.6,101.0L171.6,126.3M165.1,111.8L171.6,124.3L178.1,111.8" fill="none" stroke="#f0f" stroke-width="1" stroke-linejoin="miter" shape-rendering="crispEdges"/>
<path d="M185.5,101.0L185.5,126.3M179.0,111.8L185.5,124.3L192.0,111.8" fill="none" stroke="#008080" stroke-width="1" stroke-linejoin="miter" shape-rendering="crispEdges"/>
<path d="M255.2,103.2L255.2,128.5M248.7,114.0L255.2,126.5L261.7,114.0" fill="none" stroke="#008080" stroke-width="1" stroke-linejoin="miter" shape-rendering="crispEdges"/>
<path d="M290.2,101.0L290.2,126.3M283.7,111.8L290.2,124.3L296.7,111.8" fill="none" stroke="#f0f" stroke-width="1" stroke-linejoin="miter" shape-rendering="crispEdges"/>
<path d="M353.3,102.0L353.3,127.2M346.8,112.7L353.3,125.2L359.8,112.7" fill="none" stroke="#008080" stroke-width="1" stroke-linejoin="miter" shape-rendering="crispEdges"/>
<path d="M360.2,102.0L360.2,127.9M353.7,113.4L360.2,125.9L366.7,113.4" fill="none" stroke="#f0f" stroke-width="1" stroke-linejoin="miter" shape-rendering="crispEdges"/>
<path d="M381.4,102.0L381.4,127.2M374.9,112.7L381.4,125.2L387.9,112.7" fill="none" stroke="#008080" stroke-width="1" stroke-linejoin="miter" shape-rendering="crispEdges"/>
<path d="M444.3,102.0L444.3,127.9M437.8,113.4L444.3,125.9L450.8,113.4" fill="none" stroke="#f0f" stroke-width="1" stroke-linejoin="miter" shape-rendering="crispEdges"/>
<path d="M472.5,101.0L472.5,126.3M466.0,111.8L472.5,124.3L479.0,111.8" fill="none" stroke="#008080" stroke-width="1" stroke-linejoin="miter" shape-rendering="crispEdges"/>
<path d="M507.2,101.0L507.2,126.3M500.7,111.8L507.2,124.3L513.7,111.8" fill="none" stroke="#f0f" stroke-width="1" stroke-linejoin="miter" shape-rendering="crispEdges"/>
<path d="M528.3,97.9L528.3,123.1M521.8,108.6L528.3,121.1L534.8,108.6" fill="none" stroke="#008080" stroke-width="1" stroke-linejoin="miter" shape-rendering="crispEdges"/>
<path d="M612.2,99.5L612.2,124.0M605.7,109.5L612.2,122.0L618.7,109.5" fill="none" stroke="#008080" stroke-width="1" stroke-linejoin="miter" shape-rendering="crispEdges"/>
<path d="M661.5,99.5L661.5,124.0M655.0,109.5L661.5,122.0L668.0,109.5" fill="none" stroke="#f0f" stroke-width="1" stroke-linejoin="miter" shape-rendering="crispEdges"/>
<path d="M710.4,101.0L710.4,126.3M703.9,111.8L710.4,124.3L716.9,111.8" fill="none" stroke="#008080" stroke-width="1" stroke-linejoin="miter" shape-rendering="crispEdges"/>
<path d="M745.4,103.2L745.4,128.5M738.9,114.0L745.4,126.5L751.9,114.0" fill="none" stroke="#f0f" stroke-width="1" stroke-linejoin="miter" shape-rendering="crispEdges"/>
<path d="M815.4,99.5L815.4,124.0M808.9,109.5L815.4,122.0L821.9,109.5" fill="none" stroke="#008080" stroke-width="1" stroke-linejoin="miter" shape-rendering="crispEdges"/>
<path d="M885.0,102.6L885.0,127.0M878.5,112.5L885.0,125.0L891.5,112.5" fill="none" stroke="#f0f" stroke-width="1" stroke-linejoin="miter" shape-rendering="crispEdges"/>
<path d="M906.2,101.5L906.2,126.0M899.7,111.5L906.2,124.0L912.7,111.5" fill="none" stroke="#008080" stroke-width="1" stroke-linejoin="miter" shape-rendering="crispEdges"/>
<path d="M171.6,748.1L171.6,724.8M165.1,739.3L171.6,726.8L178.1,739.3" fill="none" stroke="#808080" stroke-width="1" stroke-linejoin="miter" shape-rendering="crispEdges"/>
<path d="M290.2,748.1L290.2,724.8M283.7,739.3L290.2,726.8L296.7,739.3" fill="none" stroke="#808080" stroke-width="1" stroke-linejoin="miter" shape-rendering="crispEdges"/>
<path d="M668.5,745.8L668.5,720.7M662.0,735.2L668.5,722.7L675.0,735.2" fill="none" stroke="#808080" stroke-width="1" stroke-linejoin="miter" shape-rendering="crispEdges"/>
<path d="M773.1,747.8L773.1,721.7M766.6,736.2L773.1,723.7L779.6,736.2" fill="none" stroke="#808080" stroke-width="1" stroke-linejoin="miter" shape-rendering="crispEdges"/>
<path d="M856.8,746.3L856.8,719.2M850.3,733.7L856.8,721.2L863.3,733.7" fill="none" stroke="#808080" stroke-width="1" stroke-linejoin="miter" shape-rendering="crispEdges"/>
<path d="M962.2,744.8L962.2,718.2M955.7,732.7L962.2,720.2L968.7,732.7" fill="none" stroke="#808080" stroke-width="1" stroke-linejoin="miter" shape-rendering="crispEdges"/>
<polyline points="81.5,607.5 99.5,610.9 116.7,614.5 123.0,616.1 138.6,618.4 154.3,621.2 174.7,621.2 185.6,619.2 201.3,614.5 213.8,612.2 220.1,613.4 232.6,609.0 248.3,604.3 263.9,598.9 272.0,596.5 285.7,589.3 301.3,580.7 317.0,573.3 332.6,568.9 351.4,560.3 367.1,557.2 378.0,557.9 389.0,557.2 400.0,559.2 414.1,560.3 432.9,560.3 451.7,559.2 464.0,563.4 479.7,568.1 495.3,571.3 518.8,572.5 551.7,572.4 567.4,568.9 581.5,563.4 605.0,556.4 628.4,550.1 644.1,544.6 664.0,538.8 689.2,534.9 720.5,527.8 751.8,523.1 773.7,520.0" fill="none" stroke="#008080" stroke-width="1" stroke-linejoin="round" shape-rendering="crispEdges" />
<polyline points="81.5,417.6 138.6,422.6 185.6,426.6 232.6,427.7 276.0,427.5 371.8,424.5 470.0,425.6 511.0,427.9 564.2,429.0 605.0,426.6 664.0,424.3 712.6,422.1 773.7,420.1" fill="none" stroke="#0ff" stroke-width="1" stroke-linejoin="round" shape-rendering="crispEdges" />
<polyline points="81.5,428.4 138.6,439.9 191.9,450.8 232.6,460.2 276.0,468.8 317.0,472.8 348.3,475.2 379.6,476.3 470.0,476.7 482.8,476.7 518.8,479.1 542.3,481.4 558.0,481.1 605.0,473.6 651.9,468.1 697.0,462.0 737.7,458.6 773.7,457.3" fill="none" stroke="#00f" stroke-width="1" stroke-linejoin="round" shape-rendering="crispEdges" />
<polyline points="79.9,385.8 96.4,393.7 107.3,402.3 121.4,411.7 134.0,424.2 146.5,433.6 159.0,440.7 173.1,444.6 185.6,446.1 198.2,445.8 209.1,441.4 221.7,439.1 232.6,432.0 245.1,424.2 256.1,417.2 267.1,405.4 276.0,396.8 285.7,381.8 301.3,361.4 315.4,346.6 332.6,338.0 348.3,328.6 357.7,320.7 365.5,316.3 387.5,316.8 400.0,321.5 418.8,327.8 434.5,335.6 445.4,340.3 457.9,351.3 470.0,362.2 476.5,369.3 489.1,381.8 504.7,392.5 518.8,395.6 534.5,396.7 550.1,396.2 565.8,391.5 581.5,387.3 592.4,381.8 601.8,374.0 611.2,364.6 620.6,356.7 630.0,346.6 639.4,337.9 648.8,330.1 658.2,322.6 662.5,320.3 675.1,310.9 690.7,305.4 707.9,297.6 725.2,297.6 747.1,296.8 759.6,296.3 773.7,297.1" fill="none" stroke="#999" stroke-width="2" stroke-linejoin="round" shape-rendering="crispEdges" />
<polyline points="79.0,522.0 83.0,526.0 91.7,532.3 107.3,541.7 123.0,552.6 138.6,566.7 157.4,577.7 173.1,580.8 188.8,581.6 201.3,580.8 217.0,576.9 232.6,569.9 248.3,558.9 260.8,547.9 270.0,537.8 285.7,520.6 301.3,501.8 317.0,487.7 332.6,481.4 345.2,472.0 356.1,464.2 364.0,460.3 376.5,459.5 389.0,460.0 395.3,462.6 411.0,467.3 420.4,472.0 426.6,475.9 442.3,481.4 451.7,487.7 461.1,495.5 464.0,497.1 473.4,509.6 484.4,520.6 495.3,526.9 507.9,531.6 523.5,534.4 536.0,534.7 551.7,533.9 567.4,530.0 583.0,524.8 597.1,517.2 612.8,503.4 628.4,490.8 641.0,481.4 651.9,472.0 659.4,466.7 668.8,458.9 678.2,453.4 689.2,450.3 700.1,444.8 711.1,441.7 720.5,443.3 737.7,442.9 756.5,440.9 773.7,440.9" fill="none" stroke="#999" stroke-width="2" stroke-linejoin="round" shape-rendering="crispEdges" />
<polyline points="81.5,379.6 87.7,375.3 97.9,376.9 108.1,380.8 116.7,380.0 122.2,379.1 124.5,383.5 134.0,402.3 144.9,424.2 150.4,431.3 160.6,436.0 171.5,441.4 184.0,445.4 192.7,450.8 199.7,450.0 206.0,440.7 213.8,437.5 221.6,436.7 232.6,422.6 240.4,413.2 248.3,404.6 256.1,392.9 263.9,386.6 270.0,383.4 279.4,374.0 285.7,359.9 295.1,348.9 304.5,344.2 311.5,334.8 318.6,333.3 329.5,330.1 337.3,325.4 346.7,320.4 354.6,321.0 359.3,330.1 367.1,334.8 379.6,332.5 389.0,330.4 403.1,323.9 415.7,319.2 421.9,320.4 429.8,328.6 437.6,334.0 445.4,338.7 451.7,347.3 457.9,351.7 465.8,348.9 473.4,347.7 479.7,358.3 487.5,372.4 495.3,388.1 507.9,405.8 517.2,407.6 528.2,411.2 549.4,411.2 556.4,405.3 565.8,395.9 573.6,386.5 581.5,375.5 589.3,364.6 597.1,356.7 605.0,350.5 612.8,347.3 620.6,342.6 628.4,337.9 636.3,332.5 644.1,327.0 651.9,320.7 656.6,319.2 665.7,322.6 673.5,326.6 681.3,333.6 689.2,340.7 695.4,343.0 703.3,339.9 711.1,337.5 723.6,337.5 737.7,336.0 759.6,334.7 773.7,335.5" fill="none" stroke="#800000" stroke-width="1" stroke-linejoin="round" shape-rendering="crispEdges" />
<polyline points="81.5,392.6 99.5,396.8 123.0,402.6 138.6,405.7 157.4,408.6 173.1,408.2 185.6,405.4 201.3,401.0 216.9,399.2 232.6,395.7 248.3,389.8 263.9,384.3 276.0,378.8 292.0,370.0 309.2,358.3 332.6,350.5 357.7,339.5 367.1,338.3 387.5,338.3 411.0,341.1 426.6,340.3 442.3,339.5 457.9,341.9 464.0,344.2 479.7,349.7 498.5,353.3 518.8,354.4 551.7,353.9 564.2,352.0 576.8,346.6 597.1,340.3 620.6,332.5 636.3,327.0 651.9,320.4 659.4,318.7 673.5,314.8 689.2,312.5 701.7,309.3 712.6,306.2 731.4,303.9 750.2,299.9 765.9,297.1 773.7,296.5" fill="none" stroke="#f00" stroke-width="1" stroke-linejoin="round" shape-rendering="crispEdges" />
<polyline points="83.0,538.6 88.5,546.4 94.8,551.1 101.1,560.5 108.9,568.3 116.7,577.7 122.2,588.4 129.3,588.7 138.6,586.3 149.6,584.0 157.4,589.1 170.0,588.7 182.5,586.3 193.5,582.4 199.7,583.2 206.0,586.3 212.3,585.5 220.1,580.8 226.4,579.3 234.2,581.2 242.0,578.5 248.3,576.1 256.1,574.6 260.8,568.3 268.6,557.3 275.5,554.0 285.7,544.1 290.4,542.5 298.2,526.9 309.2,512.8 317.0,504.9 324.8,498.7 332.6,494.8 346.7,488.5 353.0,476.7 357.7,462.6 362.4,451.7 367.9,445.4 376.5,448.6 382.8,450.9 389.0,451.7 395.3,459.5 403.1,465.8 411.0,475.2 417.2,483.0 423.5,488.2 431.3,486.9 437.6,487.7 445.4,490.8 451.7,491.6 457.9,498.7 464.2,512.8 470.3,525.3 476.5,530.0 485.9,532.8 495.3,527.6 507.9,523.7 518.8,525.3 558.0,525.3 565.8,530.0 576.8,537.8 589.3,542.5 598.7,542.2 605.0,533.1 612.8,520.6 620.6,512.8 626.9,504.9 633.1,502.6 641.0,492.4 648.8,485.4 654.7,481.6 659.4,471.4 665.7,458.9 673.5,444.8 681.3,432.3 687.6,421.3 693.9,414.3 703.3,407.2 720.5,407.5 731.4,411.1 744.0,408.5 759.6,406.9 773.7,406.0" fill="none" stroke="#000" stroke-width="1" stroke-linejoin="round" shape-rendering="crispEdges" />
<polyline points="81.5,475.9 87.7,486.0 93.2,484.5 102.6,494.7 107.3,493.9 112.0,499.4 122.2,511.9 129.3,507.2 138.6,508.8 149.6,508.0 157.4,513.5 163.7,497.8 173.1,485.3 182.5,469.6 191.9,447.7 198.2,435.2 206.0,428.9 212.3,434.4 217.0,441.4 221.7,446.9 231.0,436.7 237.3,425.8 245.1,417.9 249.8,411.7 256.1,402.3 263.9,390.5 270.2,393.7 279.4,380.2 285.7,361.4 296.6,346.6 306.0,342.6 311.5,336.4 317.0,338.0 323.3,345.8 332.6,351.3 340.5,344.2 353.0,336.4 360.8,343.4 371.8,361.4 379.6,380.2 389.0,394.3 395.3,403.7 404.7,413.1 416.4,423.3 424.3,423.3 431.3,410.0 437.6,400.8 447.0,407.3 453.2,411.0 457.9,421.8 464.2,442.3 471.8,461.9 479.7,462.6 487.5,463.4 493.8,454.8 500.0,451.7 506.3,450.1 514.1,436.8 520.4,439.2 528.2,439.9 536.0,435.2 542.3,432.1 550.1,429.0 558.0,416.0 564.2,400.6 570.5,386.5 576.8,372.4 584.6,365.4 590.9,363.8 597.1,358.3 605.0,354.9 612.8,353.3 620.6,353.6 625.3,347.3 633.1,340.3 641.0,334.8 648.8,330.1 655.1,328.5 665.7,331.7 675.1,332.8 681.3,344.6 689.2,356.3 697.0,347.7 703.3,338.3 711.1,328.9 717.3,335.2 723.6,340.7 731.4,353.7 737.7,347.7 745.5,341.4 751.8,341.4 759.6,338.3 773.7,337.8" fill="none" stroke="#ff8000" stroke-width="1" stroke-linejoin="round" shape-rendering="crispEdges" />
<polyline points="81.5,535.9 87.7,546.1 93.2,544.6 102.6,554.9 107.3,554.1 112.0,559.6 122.2,572.2 129.3,567.6 138.6,569.2 149.6,568.5 157.4,574.1 163.7,558.4 173.1,546.0 182.5,530.3 191.9,508.5 198.2,496.1 206.0,489.8 212.3,495.4 217.0,502.4 221.7,507.9 231.0,497.8 237.3,486.9 245.1,479.1 249.8,472.9 256.1,463.6 263.9,451.8 270.2,455.1 279.4,441.6 285.7,422.9 296.6,408.2 306.0,404.2 311.5,398.1 317.0,399.7 323.3,407.6 332.6,413.1 340.5,406.1 353.0,398.4 360.8,405.4 371.8,423.5 379.6,442.4 389.0,456.5 395.3,466.0 404.7,475.4 416.4,485.7 424.3,485.8 431.3,472.5 437.6,463.4 447.0,469.9 453.2,473.7 457.9,484.5 464.2,505.1 471.8,524.7 479.7,525.5 487.5,526.3 493.8,517.8 500.0,514.7 506.3,513.2 514.1,499.9 520.4,502.4 528.2,503.1 536.0,498.5 542.3,495.4 550.1,492.4 558.0,479.4 564.2,464.1 570.5,450.0 576.8,436.0 584.6,429.0 590.9,427.5 597.1,422.0 605.0,418.7 612.8,417.1 620.6,417.5 625.3,411.2 633.1,404.3 641.0,398.8 648.8,394.2 655.1,392.6 665.7,395.9 675.1,397.1 681.3,408.9 689.2,420.7 697.0,412.1 703.3,402.8 711.1,393.4 717.3,399.8 723.6,405.3 731.4,418.4 737.7,412.4 745.5,406.2 751.8,406.2 759.6,403.2 773.7,402.8" fill="none" stroke="#ff8000" stroke-width="1" stroke-linejoin="round" shape-rendering="crispEdges" />
<polyline points="81.5,452.4 99.5,463.3 115.2,472.0 127.7,485.3 138.6,494.7 146.5,501.0 157.4,506.3 170.0,510.2 185.6,512.2 198.2,512.2 210.7,509.5 224.8,502.4 235.8,495.4 248.3,486.2 263.9,471.2 270.0,465.7 285.7,452.4 301.3,432.7 317.0,415.5 332.6,406.6 345.2,400.4 356.1,391.0 367.1,385.5 387.5,386.0 400.0,391.0 411.0,393.6 423.5,400.4 434.5,405.8 445.4,411.3 454.8,419.2 464.2,426.9 476.5,437.3 489.1,448.2 500.0,456.9 507.9,460.0 518.8,460.8 529.8,462.7 542.3,463.1 551.7,462.3 565.8,458.4 581.5,452.9 594.0,446.6 605.0,437.2 614.4,428.9 626.9,419.0 639.4,408.0 651.9,398.3 665.7,384.9 679.8,377.1 689.2,373.1 703.3,367.7 712.6,366.8 731.4,368.8 744.0,367.6 759.6,365.7 773.7,366.0" fill="none" stroke="#0ff" stroke-width="1" stroke-linejoin="round" shape-rendering="crispEdges" />
<polyline points="81.5,461.8 99.5,472.7 115.2,481.4 127.7,494.7 138.6,504.1 146.5,510.4 157.4,515.9 170.0,519.8 185.6,521.8 198.2,521.8 210.7,519.1 224.8,512.0 235.8,505.0 248.3,495.8 263.9,480.8 270.0,475.3 285.7,462.0 301.3,442.5 317.0,425.3 332.6,416.4 345.2,410.2 356.1,400.8 367.1,395.3 387.5,395.8 400.0,400.8 411.0,403.4 423.5,410.2 434.5,415.8 445.4,421.3 454.8,429.2 464.2,436.9 476.5,447.3 489.1,458.2 500.0,466.9 507.9,470.0 518.8,470.8 529.8,472.7 542.3,473.1 551.7,472.3 565.8,468.4 581.5,463.1 594.0,456.8 605.0,447.4 614.4,439.1 626.9,429.2 639.4,418.2 651.9,408.5 665.7,395.1 679.8,387.3 689.2,383.3 703.3,377.9 712.6,377.2 731.4,379.2 744.0,378.0 759.6,376.1 773.7,376.4" fill="none" stroke="#0ff" stroke-width="1" stroke-linejoin="round" shape-rendering="crispEdges" />
<polyline points="81.5,457.1 99.5,468.0 115.2,476.7 127.7,490.0 138.6,499.4 146.5,505.7 157.4,511.1 170.0,515.0 185.6,517.0 198.2,517.0 210.7,514.3 224.8,507.2 235.8,500.2 248.3,491.0 263.9,476.0 270.0,470.5 285.7,457.2 301.3,437.6 317.0,420.4 332.6,411.5 345.2,405.3 356.1,395.9 367.1,390.4 387.5,390.9 400.0,395.9 411.0,398.5 423.5,405.3 434.5,410.8 445.4,416.3 454.8,424.2 464.2,431.9 476.5,442.3 489.1,453.2 500.0,461.9 507.9,465.0 518.8,465.8 529.8,467.7 542.3,468.1 551.7,467.3 565.8,463.4 581.5,458.0 594.0,451.7 605.0,442.3 614.4,434.0 626.9,424.1 639.4,413.1 651.9,403.4 665.7,390.0 679.8,382.2 689.2,378.2 703.3,372.8 712.6,372.0 731.4,374.0 744.0,372.8 759.6,370.9 773.7,371.2" fill="none" stroke="#ff0" stroke-width="2" stroke-linejoin="round" shape-rendering="crispEdges" />
<polyline points="81.5,456.8 99.5,467.7 115.2,476.4 127.7,489.7 138.6,499.1 146.5,505.4 157.4,510.8 170.0,514.7 185.6,516.7 198.2,516.7 210.7,514.0 224.8,506.9 235.8,499.9 248.3,490.7 263.9,475.7 270.0,470.2 285.7,456.9 301.3,437.3 317.0,420.1 332.6,411.2 345.2,405.0 356.1,395.6 367.1,390.1 387.5,390.6 400.0,395.6 411.0,398.2 423.5,405.0 434.5,410.5 445.4,416.0 454.8,423.9 464.2,431.6 476.5,442.0 489.1,452.9 500.0,461.6 507.9,464.7 518.8,465.5 529.8,467.4 542.3,467.8 551.7,467.0 565.8,463.1 581.5,457.7 594.0,451.4 605.0,442.0 614.4,433.7 626.9,423.8 639.4,412.8 651.9,403.1 665.7,389.7 679.8,381.9 689.2,377.9 703.3,372.5 712.6,371.7 731.4,373.7 744.0,372.5 759.6,370.6 773.7,370.9" fill="none" stroke="#207040" stroke-width="1" stroke-linejoin="round" shape-rendering="crispEdges" />
<polyline points="79.9,493.1 99.5,496.3 123.0,501.0 146.5,505.7 170.0,507.2 185.6,503.3 201.3,498.6 217.0,497.5 232.6,493.9 248.3,489.2 263.9,483.7 270.0,481.4 285.7,472.8 301.3,465.0 317.0,457.2 332.6,450.9 348.3,444.6 359.3,441.0 371.8,439.9 395.3,441.0 411.0,442.3 426.6,442.6 439.1,441.0 450.1,441.5 461.1,443.9 464.0,445.4 476.5,450.1 495.3,454.0 518.8,454.8 542.3,454.8 558.0,454.0 573.6,450.1 589.3,443.9 605.0,438.4 620.6,432.1 636.3,426.6 651.9,422.7 665.7,419.8 681.3,415.8 697.0,411.9 712.6,408.8 731.4,406.4 751.8,403.3 773.7,400.7" fill="none" stroke="#000" stroke-width="2.8" stroke-linejoin="round" shape-rendering="crispEdges" />
<polyline points="81.5,500.9 87.7,511.0 93.2,509.5 102.6,519.8 107.3,519.0 112.0,524.5 122.2,537.0 129.3,532.3 138.6,534.0 149.6,533.2 157.4,538.7 163.7,523.0 173.1,510.6 182.5,494.9 191.9,473.0 198.2,460.5 206.0,454.3 212.3,459.8 217.0,466.8 221.7,472.3 231.0,462.1 237.3,451.3 245.1,443.4 249.8,437.2 256.1,427.8 263.9,416.0 270.2,419.2 279.4,405.8 285.7,387.0 296.6,372.2 306.0,368.3 311.5,362.1 317.0,363.7 323.3,371.5 332.6,377.0 340.5,369.9 353.0,362.2 360.8,369.2 371.8,387.2 379.6,406.1 389.0,420.2 395.3,429.6 404.7,439.0 416.4,449.3 424.3,449.3 431.3,436.0 437.6,426.8 447.0,433.4 453.2,437.1 457.9,447.9 464.2,468.4 471.8,488.0 479.7,488.8 487.5,489.6 493.8,481.0 500.0,477.9 506.3,476.3 514.1,463.0 520.4,465.5 528.2,466.2 536.0,461.5 542.3,458.4 550.1,455.4 558.0,442.4 564.2,427.0 570.5,412.9 576.8,398.8 584.6,391.9 590.9,390.3 597.1,384.8 605.0,381.4 612.8,379.8 620.6,380.2 625.3,373.9 633.1,366.9 641.0,361.4 648.8,356.7 655.1,355.2 665.7,358.4 675.1,359.5 681.3,371.3 689.2,383.1 697.0,374.5 703.3,365.1 711.1,355.7 717.3,362.0 723.6,367.6 731.4,380.6 737.7,374.6 745.5,368.3 751.8,368.3 759.6,365.3 773.7,364.8" fill="none" stroke="#f0f" stroke-width="1" stroke-linejoin="round" shape-rendering="crispEdges" />
<polyline points="81.5,506.2 87.7,516.3 93.2,514.8 102.6,525.1 107.3,524.3 112.0,529.8 122.2,542.3 129.3,537.7 138.6,539.3 149.6,538.5 157.4,544.1 163.7,528.4 173.1,515.9 182.5,500.3 191.9,478.4 198.2,465.9 206.0,459.6 212.3,465.2 217.0,472.2 221.7,477.7 231.0,467.5 237.3,456.6 245.1,448.8 249.8,442.6 256.1,433.2 263.9,421.4 270.2,424.7 279.4,411.2 285.7,392.4 296.6,377.6 306.0,373.7 311.5,367.5 317.0,369.1 323.3,376.9 332.6,382.5 340.5,375.4 353.0,367.6 360.8,374.7 371.8,392.7 379.6,411.5 389.0,425.7 395.3,435.1 404.7,444.5 416.4,454.8 424.3,454.8 431.3,441.5 437.6,432.3 447.0,438.9 453.2,442.6 457.9,453.4 464.2,473.9 471.8,493.6 479.7,494.3 487.5,495.1 493.8,486.5 500.0,483.5 506.3,481.9 514.1,468.6 520.4,471.0 528.2,471.7 536.0,467.1 542.3,464.0 550.1,460.9 558.0,448.0 564.2,432.6 570.5,418.5 576.8,404.4 584.6,397.4 590.9,395.9 597.1,390.4 605.0,387.0 612.8,385.4 620.6,385.8 625.3,379.5 633.1,372.5 641.0,367.0 648.8,362.4 655.1,360.8 665.7,364.0 675.1,365.2 681.3,377.0 689.2,388.7 697.0,380.1 703.3,370.8 711.1,361.4 717.3,367.7 723.6,373.2 731.4,386.2 737.7,380.3 745.5,374.0 751.8,374.0 759.6,370.9 773.7,370.5" fill="none" stroke="#0f0" stroke-width="1" stroke-linejoin="round" shape-rendering="crispEdges" />
<polyline points="81.5,511.5 87.7,521.6 93.2,520.2 102.6,530.4 107.3,529.6 112.0,535.1 122.2,547.7 129.3,543.0 138.6,544.6 149.6,543.9 157.4,549.4 163.7,533.7 173.1,521.3 182.5,505.6 191.9,483.8 198.2,471.3 206.0,465.0 212.3,470.5 217.0,477.6 221.7,483.1 231.0,472.9 237.3,462.0 245.1,454.2 249.8,448.0 256.1,438.6 263.9,426.8 270.2,430.1 279.4,416.6 285.7,397.8 296.6,383.1 306.0,379.1 311.5,372.9 317.0,374.6 323.3,382.4 332.6,387.9 340.5,380.8 353.0,373.1 360.8,380.1 371.8,398.2 379.6,417.0 389.0,431.1 395.3,440.6 404.7,450.0 416.4,460.3 424.3,460.3 431.3,447.0 437.6,437.8 447.0,444.4 453.2,448.1 457.9,458.9 464.2,479.4 471.8,499.1 479.7,499.8 487.5,500.6 493.8,492.1 500.0,489.0 506.3,487.4 514.1,474.1 520.4,476.6 528.2,477.3 536.0,472.6 542.3,469.6 550.1,466.5 558.0,453.5 564.2,438.2 570.5,424.1 576.8,410.0 584.6,403.0 590.9,401.5 597.1,396.0 605.0,392.6 612.8,391.0 620.6,391.4 625.3,385.1 633.1,378.1 641.0,372.7 648.8,368.0 655.1,366.4 665.7,369.7 675.1,370.8 681.3,382.6 689.2,394.4 697.0,385.8 703.3,376.4 711.1,367.0 717.3,373.4 723.6,378.9 731.4,391.9 737.7,385.9 745.5,379.7 751.8,379.7 759.6,376.6 773.7,376.2" fill="none" stroke="#f0f" stroke-width="1" stroke-linejoin="round" shape-rendering="crispEdges" />
<rect x="80" y="525" width="1" height="30" fill="#000"/>
<rect x="78" y="525" width="5" height="21" fill="#000" />
<rect x="87" y="535" width="1" height="22" fill="#000"/>
<rect x="85" y="543" width="5" height="7" fill="#000" />
<rect x="86" y="544" width="3" height="5" fill="#fff" />
<rect x="94" y="505" width="1" height="30" fill="#000"/>
<rect x="92" y="511" width="5" height="22" fill="#000" />
<rect x="93" y="512" width="3" height="20" fill="#fff" />
<rect x="101" y="525" width="1" height="50" fill="#f00"/>
<rect x="99" y="525" width="5" height="18" fill="#f00" />
<rect x="108" y="528" width="1" height="29" fill="#f00"/>
<rect x="106" y="530" width="5" height="17" fill="#f00" />
<rect x="107" y="531" width="3" height="15" fill="#fff" />
<rect x="115" y="529" width="1" height="18" fill="#000"/>
<rect x="113" y="531" width="5" height="8" fill="#000" />
<rect x="122" y="528" width="1" height="38" fill="#f00"/>
<rect x="120" y="539" width="5" height="27" fill="#f00" />
<rect x="129" y="522" width="1" height="31" fill="#f00"/>
<rect x="127" y="528" width="5" height="25" fill="#f00" />
<rect x="128" y="529" width="3" height="23" fill="#fff" />
<rect x="136" y="534" width="1" height="20" fill="#f00"/>
<rect x="134" y="534" width="5" height="6" fill="#f00" />
<rect x="135" y="535" width="3" height="4" fill="#fff" />
<rect x="143" y="511" width="1" height="47" fill="#f00"/>
<rect x="141" y="525" width="5" height="17" fill="#f00" />
<rect x="150" y="514" width="1" height="32" fill="#000"/>
<rect x="148" y="526" width="5" height="7" fill="#000" />
<rect x="149" y="527" width="3" height="5" fill="#fff" />
<rect x="157" y="533" width="1" height="20" fill="#f00"/>
<rect x="155" y="533" width="5" height="19" fill="#f00" />
<rect x="164" y="496" width="1" height="54" fill="#f00"/>
<rect x="162" y="502" width="5" height="40" fill="#f00" />
<rect x="163" y="503" width="3" height="38" fill="#fff" />
<rect x="171" y="470" width="1" height="33" fill="#000"/>
<rect x="169" y="493" width="5" height="10" fill="#000" />
<rect x="178" y="488" width="1" height="23" fill="#000"/>
<rect x="176" y="488" width="5" height="19" fill="#000" />
<rect x="177" y="489" width="3" height="17" fill="#fff" />
<rect x="185" y="460" width="1" height="21" fill="#000"/>
<rect x="183" y="460" width="5" height="21" fill="#000" />
<rect x="184" y="461" width="3" height="19" fill="#fff" />
<rect x="192" y="445" width="1" height="33" fill="#000"/>
<rect x="190" y="452" width="5" height="4" fill="#000" />
<rect x="191" y="453" width="3" height="2" fill="#fff" />
<rect x="199" y="440" width="1" height="31" fill="#000"/>
<rect x="197" y="444" width="5" height="21" fill="#000" />
<rect x="198" y="445" width="3" height="19" fill="#fff" />
<rect x="206" y="434" width="1" height="17" fill="#000"/>
<rect x="204" y="443" width="5" height="5" fill="#000" />
<rect x="213" y="434" width="1" height="50" fill="#000"/>
<rect x="211" y="441" width="5" height="43" fill="#000" />
<rect x="220" y="486" width="1" height="20" fill="#000"/>
<rect x="218" y="492" width="5" height="7" fill="#000" />
<rect x="227" y="459" width="1" height="40" fill="#000"/>
<rect x="225" y="459" width="5" height="36" fill="#000" />
<rect x="226" y="460" width="3" height="34" fill="#fff" />
<rect x="234" y="420" width="1" height="38" fill="#000"/>
<rect x="232" y="431" width="5" height="25" fill="#000" />
<rect x="233" y="432" width="3" height="23" fill="#fff" />
<rect x="241" y="429" width="1" height="19" fill="#000"/>
<rect x="239" y="434" width="5" height="7" fill="#000" />
<rect x="240" y="435" width="3" height="5" fill="#fff" />
<rect x="248" y="431" width="1" height="39" fill="#000"/>
<rect x="246" y="434" width="5" height="18" fill="#000" />
<rect x="247" y="435" width="3" height="16" fill="#fff" />
<rect x="255" y="409" width="1" height="25" fill="#00f"/>
<rect x="253" y="409" width="5" height="14" fill="#00f" />
<rect x="254" y="410" width="3" height="12" fill="#fff" />
<rect x="262" y="389" width="1" height="26" fill="#00f"/>
<rect x="260" y="402" width="5" height="10" fill="#00f" />
<rect x="261" y="403" width="3" height="8" fill="#fff" />
<rect x="269" y="406" width="1" height="28" fill="#00f"/>
<rect x="267" y="414" width="5" height="19" fill="#00f" />
<rect x="276" y="399" width="1" height="32" fill="#00f"/>
<rect x="274" y="399" width="5" height="32" fill="#00f" />
<rect x="275" y="400" width="3" height="30" fill="#fff" />
<rect x="283" y="358" width="1" height="62" fill="#00f"/>
<rect x="281" y="375" width="5" height="28" fill="#00f" />
<rect x="282" y="376" width="3" height="26" fill="#fff" />
<rect x="290" y="332" width="1" height="29" fill="#00f"/>
<rect x="288" y="341" width="5" height="12" fill="#00f" />
<rect x="289" y="342" width="3" height="10" fill="#fff" />
<rect x="297" y="339" width="1" height="33" fill="#00f"/>
<rect x="295" y="365" width="5" height="2" fill="#00f"/>
<rect x="304" y="372" width="1" height="18" fill="#00f"/>
<rect x="302" y="375" width="5" height="6" fill="#00f" />
<rect x="311" y="343" width="1" height="49" fill="#00f"/>
<rect x="309" y="350" width="5" height="33" fill="#00f" />
<rect x="310" y="351" width="3" height="31" fill="#fff" />
<rect x="318" y="354" width="1" height="25" fill="#00f"/>
<rect x="316" y="356" width="5" height="21" fill="#00f" />
<rect x="325" y="354" width="1" height="49" fill="#00f"/>
<rect x="323" y="361" width="5" height="36" fill="#00f" />
<rect x="332" y="390" width="1" height="18" fill="#00f"/>
<rect x="330" y="392" width="5" height="11" fill="#00f" />
<rect x="331" y="393" width="3" height="9" fill="#fff" />
<rect x="339" y="365" width="1" height="25" fill="#00f"/>
<rect x="337" y="365" width="5" height="23" fill="#00f" />
<rect x="338" y="366" width="3" height="21" fill="#fff" />
<rect x="346" y="352" width="1" height="37" fill="#00f"/>
<rect x="344" y="366" width="5" height="5" fill="#00f" />
<rect x="345" y="367" width="3" height="3" fill="#fff" />
<rect x="353" y="360" width="1" height="23" fill="#00f"/>
<rect x="351" y="360" width="5" height="15" fill="#00f" />
<rect x="352" y="361" width="3" height="13" fill="#fff" />
<rect x="360" y="365" width="1" height="27" fill="#00f"/>
<rect x="358" y="377" width="5" height="15" fill="#00f" />
<rect x="367" y="397" width="1" height="18" fill="#00f"/>
<rect x="365" y="398" width="5" height="2" fill="#00f"/>
<rect x="374" y="413" width="1" height="32" fill="#000"/>
<rect x="372" y="413" width="5" height="32" fill="#000" />
<rect x="381" y="433" width="1" height="22" fill="#000"/>
<rect x="379" y="439" width="5" height="9" fill="#000" />
<rect x="388" y="426" width="1" height="34" fill="#000"/>
<rect x="386" y="432" width="5" height="4" fill="#000" />
<rect x="395" y="455" width="1" height="19" fill="#000"/>
<rect x="393" y="457" width="5" height="3" fill="#000" />
<rect x="402" y="432" width="1" height="25" fill="#000"/>
<rect x="400" y="447" width="5" height="6" fill="#000" />
<rect x="409" y="443" width="1" height="17" fill="#000"/>
<rect x="407" y="455" width="5" height="5" fill="#000" />
<rect x="416" y="458" width="1" height="19" fill="#000"/>
<rect x="414" y="463" width="5" height="8" fill="#000" />
<rect x="423" y="449" width="1" height="34" fill="#000"/>
<rect x="421" y="454" width="5" height="24" fill="#000" />
<rect x="422" y="455" width="3" height="22" fill="#fff" />
<rect x="430" y="415" width="1" height="28" fill="#000"/>
<rect x="428" y="417" width="5" height="26" fill="#000" />
<rect x="429" y="418" width="3" height="24" fill="#fff" />
<rect x="437" y="398" width="1" height="18" fill="#000"/>
<rect x="435" y="411" width="5" height="5" fill="#000" />
<rect x="444" y="414" width="1" height="39" fill="#000"/>
<rect x="442" y="415" width="5" height="36" fill="#000" />
<rect x="451" y="443" width="1" height="16" fill="#000"/>
<rect x="449" y="448" width="5" height="3" fill="#000" />
<rect x="450" y="449" width="3" height="1" fill="#fff" />
<rect x="458" y="432" width="1" height="61" fill="#f00"/>
<rect x="456" y="443" width="5" height="45" fill="#f00" />
<rect x="465" y="488" width="1" height="40" fill="#f00"/>
<rect x="463" y="492" width="5" height="29" fill="#f00" />
<rect x="472" y="496" width="1" height="54" fill="#f00"/>
<rect x="470" y="524" width="5" height="11" fill="#f00" />
<rect x="471" y="525" width="3" height="9" fill="#fff" />
<rect x="479" y="478" width="1" height="36" fill="#f00"/>
<rect x="477" y="489" width="5" height="13" fill="#f00" />
<rect x="478" y="490" width="3" height="11" fill="#fff" />
<rect x="486" y="503" width="1" height="30" fill="#f00"/>
<rect x="484" y="503" width="5" height="9" fill="#f00" />
<rect x="485" y="504" width="3" height="7" fill="#fff" />
<rect x="493" y="463" width="1" height="55" fill="#f00"/>
<rect x="491" y="466" width="5" height="45" fill="#f00" />
<rect x="492" y="467" width="3" height="43" fill="#fff" />
<rect x="500" y="467" width="1" height="30" fill="#f00"/>
<rect x="498" y="467" width="5" height="22" fill="#f00" />
<rect x="507" y="467" width="1" height="23" fill="#000"/>
<rect x="505" y="470" width="5" height="19" fill="#000" />
<rect x="506" y="471" width="3" height="17" fill="#fff" />
<rect x="514" y="437" width="1" height="22" fill="#000"/>
<rect x="512" y="442" width="5" height="14" fill="#000" />
<rect x="513" y="443" width="3" height="12" fill="#fff" />
<rect x="521" y="420" width="1" height="59" fill="#000"/>
<rect x="519" y="442" width="5" height="37" fill="#000" />
<rect x="528" y="438" width="1" height="50" fill="#000"/>
<rect x="526" y="466" width="5" height="5" fill="#000" />
<rect x="535" y="458" width="1" height="36" fill="#000"/>
<rect x="533" y="460" width="5" height="17" fill="#000" />
<rect x="534" y="461" width="3" height="15" fill="#fff" />
<rect x="542" y="440" width="1" height="18" fill="#000"/>
<rect x="540" y="452" width="5" height="4" fill="#000" />
<rect x="549" y="455" width="1" height="15" fill="#000"/>
<rect x="547" y="456" width="5" height="4" fill="#000" />
<rect x="556" y="425" width="1" height="19" fill="#000"/>
<rect x="554" y="428" width="5" height="15" fill="#000" />
<rect x="555" y="429" width="3" height="13" fill="#fff" />
<rect x="563" y="410" width="1" height="14" fill="#000"/>
<rect x="561" y="414" width="5" height="3" fill="#000" />
<rect x="562" y="415" width="3" height="1" fill="#fff" />
<rect x="570" y="380" width="1" height="32" fill="#00f"/>
<rect x="568" y="382" width="5" height="30" fill="#00f" />
<rect x="569" y="383" width="3" height="28" fill="#fff" />
<rect x="577" y="370" width="1" height="16" fill="#00f"/>
<rect x="575" y="372" width="5" height="14" fill="#00f" />
<rect x="576" y="373" width="3" height="12" fill="#fff" />
<rect x="584" y="367" width="1" height="25" fill="#00f"/>
<rect x="582" y="370" width="5" height="16" fill="#00f" />
<rect x="591" y="386" width="1" height="15" fill="#00f"/>
<rect x="589" y="389" width="5" height="3" fill="#00f" />
<rect x="598" y="382" width="1" height="21" fill="#00f"/>
<rect x="596" y="383" width="5" height="14" fill="#00f" />
<rect x="597" y="384" width="3" height="12" fill="#fff" />
<rect x="605" y="380" width="1" height="21" fill="#00f"/>
<rect x="603" y="382" width="5" height="12" fill="#00f" />
<rect x="604" y="383" width="3" height="10" fill="#fff" />
<rect x="612" y="372" width="1" height="11" fill="#00f"/>
<rect x="610" y="380" width="5" height="2" fill="#00f"/>
<rect x="619" y="366" width="1" height="27" fill="#00f"/>
<rect x="617" y="374" width="5" height="17" fill="#00f" />
<rect x="626" y="358" width="1" height="30" fill="#00f"/>
<rect x="624" y="360" width="5" height="27" fill="#00f" />
<rect x="625" y="361" width="3" height="25" fill="#fff" />
<rect x="633" y="350" width="1" height="28" fill="#00f"/>
<rect x="631" y="363" width="5" height="3" fill="#00f" />
<rect x="640" y="357" width="1" height="15" fill="#00f"/>
<rect x="638" y="357" width="5" height="8" fill="#00f" />
<rect x="639" y="358" width="3" height="6" fill="#fff" />
<rect x="647" y="347" width="1" height="15" fill="#00f"/>
<rect x="645" y="350" width="5" height="6" fill="#00f" />
<rect x="654" y="350" width="1" height="15" fill="#00f"/>
<rect x="652" y="356" width="5" height="9" fill="#00f" />
<rect x="653" y="357" width="3" height="7" fill="#fff" />
<rect x="661" y="358" width="1" height="19" fill="#00f"/>
<rect x="659" y="368" width="5" height="2" fill="#00f"/>
<rect x="668" y="364" width="1" height="14" fill="#00f"/>
<rect x="666" y="368" width="5" height="2" fill="#00f"/>
<rect x="675" y="362" width="1" height="14" fill="#00f"/>
<rect x="673" y="366" width="5" height="3" fill="#00f" />
<rect x="674" y="367" width="3" height="1" fill="#fff" />
<rect x="682" y="371" width="1" height="32" fill="#00f"/>
<rect x="680" y="371" width="5" height="31" fill="#00f" />
<rect x="689" y="393" width="1" height="23" fill="#00f"/>
<rect x="687" y="393" width="5" height="19" fill="#00f" />
<rect x="696" y="364" width="1" height="37" fill="#00f"/>
<rect x="694" y="366" width="5" height="34" fill="#00f" />
<rect x="695" y="367" width="3" height="32" fill="#fff" />
<rect x="703" y="346" width="1" height="24" fill="#00f"/>
<rect x="701" y="347" width="5" height="22" fill="#00f" />
<rect x="702" y="348" width="3" height="20" fill="#fff" />
<rect x="710" y="337" width="1" height="13" fill="#00f"/>
<rect x="708" y="348" width="5" height="2" fill="#00f"/>
<rect x="717" y="350" width="1" height="42" fill="#00f"/>
<rect x="715" y="350" width="5" height="26" fill="#00f" />
<rect x="724" y="359" width="1" height="33" fill="#00f"/>
<rect x="722" y="373" width="5" height="19" fill="#00f" />
<rect x="731" y="396" width="1" height="19" fill="#000"/>
<rect x="729" y="396" width="5" height="12" fill="#000" />
<rect x="738" y="359" width="1" height="37" fill="#00f"/>
<rect x="736" y="366" width="5" height="29" fill="#00f" />
<rect x="737" y="367" width="3" height="27" fill="#fff" />
<rect x="745" y="362" width="1" height="10" fill="#00f"/>
<rect x="743" y="364" width="5" height="2" fill="#00f"/>
<rect x="752" y="369" width="1" height="7" fill="#00f"/>
<rect x="750" y="372" width="5" height="4" fill="#00f" />
<rect x="759" y="355" width="1" height="30" fill="#00f"/>
<rect x="757" y="362" width="5" height="4" fill="#00f" />
<rect x="766" y="366" width="1" height="15" fill="#00f"/>
<rect x="764" y="368" width="5" height="2" fill="#00f"/>
<rect x="773" y="361" width="1" height="24" fill="#00f"/>
<rect x="771" y="364" width="5" height="9" fill="#00f" />
<text x="849.3" y="204" font-size="14" font-weight="bold" fill="#000" text-anchor="start" font-family="'Liberation Sans',sans-serif" textLength="29.1" lengthAdjust="spacingAndGlyphs" >4412</text>
<rect x="836" y="208" width="57" height="1" fill="#f00"/>
<text x="849.3" y="319" font-size="14" font-weight="bold" fill="#000" text-anchor="start" font-family="'Liberation Sans',sans-serif" textLength="29.1" lengthAdjust="spacingAndGlyphs" >4214</text>
<rect x="836" y="323" width="57" height="1" fill="#f00"/>
<text x="849.3" y="428" font-size="14" font-weight="bold" fill="#000" text-anchor="start" font-family="'Liberation Sans',sans-serif" textLength="29.1" lengthAdjust="spacingAndGlyphs" >4016</text>
<rect x="836" y="434" width="57" height="1" fill="#f00"/>
<text x="849.3" y="641" font-size="14" font-weight="bold" fill="#000" text-anchor="start" font-family="'Liberation Sans',sans-serif" textLength="29.1" lengthAdjust="spacingAndGlyphs" >3641</text>
<rect x="836" y="648" width="57" height="1" fill="#f00"/>
<text x="472.6" y="292.8" font-size="14" font-weight="bold" fill="#000" text-anchor="start" font-family="'Liberation Sans',sans-serif" textLength="69" lengthAdjust="spacingAndGlyphs" >T Structure</text>
<text x="746.3" y="468.8" font-size="14" font-weight="bold" fill="#000" text-anchor="start" font-family="'Liberation Sans',sans-serif" textLength="94.5" lengthAdjust="spacingAndGlyphs" >S/T BUY Signal</text>
<text x="684" y="570" font-size="14" font-weight="bold" fill="#000" text-anchor="start" font-family="'Liberation Sans',sans-serif" textLength="46.5" lengthAdjust="spacingAndGlyphs" >Small T</text>
<text x="682.5" y="585.5" font-size="14" font-weight="bold" fill="#000" text-anchor="start" font-family="'Liberation Sans',sans-serif" textLength="64" lengthAdjust="spacingAndGlyphs" >collapsing</text>
<text x="388.4" y="654.3" font-size="14" font-weight="bold" fill="#000" text-anchor="start" font-family="'Liberation Sans',sans-serif" textLength="69" lengthAdjust="spacingAndGlyphs" >T Structure</text>
<text x="388.4" y="670.3" font-size="14" font-weight="bold" fill="#000" text-anchor="start" font-family="'Liberation Sans',sans-serif" textLength="92.4" lengthAdjust="spacingAndGlyphs" >collapsing into</text>
<text x="388.4" y="686.3" font-size="14" font-weight="bold" fill="#000" text-anchor="start" font-family="'Liberation Sans',sans-serif" textLength="96.8" lengthAdjust="spacingAndGlyphs" >larger structure</text>
<text x="647.5" y="697" font-size="14" font-weight="bold" fill="#000" text-anchor="start" font-family="'Liberation Sans',sans-serif" textLength="136" lengthAdjust="spacingAndGlyphs" >Possible DB Structure</text>
<text x="941.3" y="138" font-size="14" font-weight="bold" fill="#000" text-anchor="start" font-family="'Liberation Sans',sans-serif" textLength="171.3" lengthAdjust="spacingAndGlyphs" >Next Echo and Pulse Highs</text>
<text x="941.3" y="186" font-size="14" font-weight="bold" fill="#000" text-anchor="start" font-family="'Liberation Sans',sans-serif" textLength="123.0" lengthAdjust="spacingAndGlyphs" >* S/T BUY SIGNAL *</text>
<text x="941.3" y="202" font-size="14" font-weight="bold" fill="#000" text-anchor="start" font-family="'Liberation Sans',sans-serif" textLength="122.0" lengthAdjust="spacingAndGlyphs" >* MIXED SIGNALS *</text>
<text x="941.3" y="234" font-size="14" font-weight="bold" fill="#000" text-anchor="start" font-family="'Liberation Sans',sans-serif" textLength="210.8" lengthAdjust="spacingAndGlyphs" >S/T BUY Signal at 4110 on 05 May</text>
<text x="941.3" y="266" font-size="14" font-weight="bold" fill="#000" text-anchor="start" font-family="'Liberation Sans',sans-serif" textLength="215.4" lengthAdjust="spacingAndGlyphs" >T volume Osc: negative on 11 May</text>
<text x="941.3" y="282" font-size="14" font-weight="bold" fill="#000" text-anchor="start" font-family="'Liberation Sans',sans-serif" textLength="77.9" lengthAdjust="spacingAndGlyphs" >Down a little</text>
<text x="941.3" y="314" font-size="14" font-weight="bold" fill="#000" text-anchor="start" font-family="'Liberation Sans',sans-serif" textLength="164.2" lengthAdjust="spacingAndGlyphs" >Osc: Sell Signal on 25 Apr</text>
<text x="941.3" y="330" font-size="14" font-weight="bold" fill="#000" text-anchor="start" font-family="'Liberation Sans',sans-serif" textLength="77.9" lengthAdjust="spacingAndGlyphs" >Down a little</text>
<text x="941.3" y="394" font-size="14" font-weight="bold" fill="#000" text-anchor="start" font-family="'Liberation Sans',sans-serif" textLength="84.6" lengthAdjust="spacingAndGlyphs" >Click here for</text>
<text x="941.3" y="410" font-size="14" font-weight="bold" fill="#000" text-anchor="start" font-family="'Liberation Sans',sans-serif" textLength="119.1" lengthAdjust="spacingAndGlyphs" >More Information...</text>
<text x="941.3" y="682" font-size="14" font-weight="bold" fill="#000" text-anchor="start" font-family="'Liberation Sans',sans-serif" textLength="138.9" lengthAdjust="spacingAndGlyphs" >Next Projected Low(s)</text>
</g>
<rect x="77" y="754" width="1172" height="1" fill="#000" />
<rect x="77" y="754" width="1" height="184" fill="#000" />
<rect x="78" y="755" width="1110" height="166" fill="#fff" />
<rect x="1188" y="754" width="61" height="184" fill="#000" />
<rect x="1189" y="755" width="59" height="152" fill="#d4d0c8" />
<rect x="1189" y="908" width="59" height="14" fill="#ffffe1" />
<text x="1219" y="919.5" font-size="12.5" font-weight="bold" fill="#000" text-anchor="middle" font-family="'Liberation Sans',sans-serif" textLength="27" lengthAdjust="spacingAndGlyphs" >-150</text>
<rect x="78" y="921" width="1110" height="1" fill="#000"/>
<rect x="78" y="922" width="1109" height="15" fill="#d4d0c8" />
<rect x="1187" y="922" width="1" height="15" fill="#000"/>
<rect x="1189" y="923" width="59" height="14" fill="#d4d0c8" />
<rect x="77" y="938" width="1174" height="2" fill="#fff"/>
<rect x="1249" y="754" width="2" height="186" fill="#fff"/>
<clipPath id="cax"><rect x="1189" y="755" width="59" height="152"/></clipPath><g clip-path="url(#cax)">
<rect x="1189" y="756" width="7" height="1" fill="#000"/>
<text x="1197" y="761" font-size="12.5" font-weight="bold" fill="#000" text-anchor="start" font-family="'Liberation Sans',sans-serif" >200</text>
<rect x="1189" y="802" width="7" height="1" fill="#000"/>
<text x="1197" y="807" font-size="12.5" font-weight="bold" fill="#000" text-anchor="start" font-family="'Liberation Sans',sans-serif" >100</text>
<rect x="1189" y="847" width="7" height="1" fill="#000"/>
<text x="1197" y="852" font-size="12.5" font-weight="bold" fill="#000" text-anchor="start" font-family="'Liberation Sans',sans-serif" >0</text>
<rect x="1189" y="892" width="7" height="1" fill="#000"/>
<text x="1197" y="897" font-size="12.5" font-weight="bold" fill="#000" text-anchor="start" font-family="'Liberation Sans',sans-serif" >-100</text>
</g>
<rect x="1190" y="901" width="1" height="1" fill="#000" />
<rect x="1190" y="897" width="1" height="1" fill="#000" />
<rect x="1190" y="888" width="1" height="1" fill="#000" />
<rect x="1190" y="883" width="1" height="1" fill="#000" />
<rect x="1190" y="879" width="1" height="1" fill="#000" />
<rect x="1190" y="874" width="1" height="1" fill="#000" />
<rect x="1189" y="870" width="4" height="1" fill="#000"/>
<rect x="1190" y="865" width="1" height="1" fill="#000" />
<rect x="1190" y="861" width="1" height="1" fill="#000" />
<rect x="1190" y="856" width="1" height="1" fill="#000" />
<rect x="1190" y="852" width="1" height="1" fill="#000" />
<rect x="1190" y="842" width="1" height="1" fill="#000" />
<rect x="1190" y="838" width="1" height="1" fill="#000" />
<rect x="1190" y="833" width="1" height="1" fill="#000" />
<rect x="1190" y="829" width="1" height="1" fill="#000" />
<rect x="1189" y="824" width="4" height="1" fill="#000"/>
<rect x="1190" y="820" width="1" height="1" fill="#000" />
<rect x="1190" y="815" width="1" height="1" fill="#000" />
<rect x="1190" y="811" width="1" height="1" fill="#000" />
<rect x="1190" y="806" width="1" height="1" fill="#000" />
<rect x="1190" y="797" width="1" height="1" fill="#000" />
<rect x="1190" y="793" width="1" height="1" fill="#000" />
<rect x="1190" y="788" width="1" height="1" fill="#000" />
<rect x="1190" y="784" width="1" height="1" fill="#000" />
<rect x="1189" y="779" width="4" height="1" fill="#000"/>
<rect x="1190" y="775" width="1" height="1" fill="#000" />
<rect x="1190" y="770" width="1" height="1" fill="#000" />
<rect x="1190" y="765" width="1" height="1" fill="#000" />
<rect x="1190" y="761" width="1" height="1" fill="#000" />
<g clip-path="url(#cosc)">
<text x="78" y="767.5" font-size="14" font-weight="bold" fill="#000" text-anchor="start" font-family="'Liberation Sans',sans-serif" textLength="53.1" lengthAdjust="spacingAndGlyphs" >Osc 5,35</text>
<rect x="80" y="847" width="1" height="1" fill="#00f"/>
<rect x="87" y="847" width="1" height="21" fill="#00f"/>
<rect x="94" y="847" width="1" height="35" fill="#00f"/>
<rect x="101" y="847" width="1" height="44" fill="#00f"/>
<rect x="108" y="847" width="1" height="49" fill="#00f"/>
<rect x="115" y="847" width="1" height="49" fill="#00f"/>
<rect x="122" y="847" width="1" height="51" fill="#00f"/>
<rect x="129" y="847" width="1" height="54" fill="#00f"/>
<rect x="136" y="847" width="1" height="53" fill="#00f"/>
<rect x="143" y="847" width="1" height="51" fill="#00f"/>
<rect x="150" y="847" width="1" height="48" fill="#00f"/>
<rect x="157" y="847" width="1" height="45" fill="#00f"/>
<rect x="164" y="847" width="1" height="41" fill="#00f"/>
<rect x="171" y="847" width="1" height="32" fill="#00f"/>
<rect x="178" y="847" width="1" height="26" fill="#00f"/>
<rect x="185" y="847" width="1" height="15" fill="#00f"/>
<rect x="192" y="847" width="1" height="3" fill="#00f"/>
<rect x="199" y="838" width="1" height="10" fill="#00f"/>
<rect x="206" y="831" width="1" height="17" fill="#00f"/>
<rect x="213" y="823" width="1" height="25" fill="#00f"/>
<rect x="220" y="826" width="1" height="22" fill="#00f"/>
<rect x="227" y="829" width="1" height="19" fill="#00f"/>
<rect x="234" y="826" width="1" height="22" fill="#00f"/>
<rect x="241" y="825" width="1" height="23" fill="#00f"/>
<rect x="248" y="823" width="1" height="25" fill="#00f"/>
<rect x="255" y="811" width="1" height="37" fill="#00f"/>
<rect x="262" y="800" width="1" height="48" fill="#00f"/>
<rect x="269" y="798" width="1" height="50" fill="#00f"/>
<rect x="276" y="795" width="1" height="53" fill="#00f"/>
<rect x="283" y="787" width="1" height="61" fill="#00f"/>
<rect x="290" y="778" width="1" height="70" fill="#00f"/>
<rect x="297" y="772" width="1" height="76" fill="#00f"/>
<rect x="304" y="767" width="1" height="81" fill="#00f"/>
<rect x="311" y="762" width="1" height="86" fill="#00f"/>
<rect x="318" y="762" width="1" height="86" fill="#00f"/>
<rect x="325" y="771" width="1" height="77" fill="#00f"/>
<rect x="332" y="781" width="1" height="67" fill="#00f"/>
<rect x="339" y="784" width="1" height="64" fill="#00f"/>
<rect x="346" y="788" width="1" height="60" fill="#00f"/>
<rect x="353" y="793" width="1" height="55" fill="#00f"/>
<rect x="360" y="797" width="1" height="51" fill="#00f"/>
<rect x="367" y="801" width="1" height="47" fill="#00f"/>
<rect x="374" y="812" width="1" height="36" fill="#00f"/>
<rect x="381" y="826" width="1" height="22" fill="#00f"/>
<rect x="388" y="840" width="1" height="8" fill="#00f"/>
<rect x="395" y="847" width="1" height="9" fill="#00f"/>
<rect x="402" y="847" width="1" height="17" fill="#00f"/>
<rect x="409" y="847" width="1" height="23" fill="#00f"/>
<rect x="416" y="847" width="1" height="27" fill="#00f"/>
<rect x="423" y="847" width="1" height="32" fill="#00f"/>
<rect x="430" y="847" width="1" height="27" fill="#00f"/>
<rect x="437" y="847" width="1" height="21" fill="#00f"/>
<rect x="444" y="847" width="1" height="20" fill="#00f"/>
<rect x="451" y="847" width="1" height="17" fill="#00f"/>
<rect x="458" y="847" width="1" height="15" fill="#00f"/>
<rect x="465" y="847" width="1" height="28" fill="#00f"/>
<rect x="472" y="847" width="1" height="45" fill="#00f"/>
<rect x="479" y="847" width="1" height="54" fill="#00f"/>
<rect x="486" y="847" width="1" height="63" fill="#00f"/>
<rect x="493" y="847" width="1" height="67" fill="#00f"/>
<rect x="500" y="847" width="1" height="62" fill="#00f"/>
<rect x="507" y="847" width="1" height="53" fill="#00f"/>
<rect x="514" y="847" width="1" height="44" fill="#00f"/>
<rect x="521" y="847" width="1" height="33" fill="#00f"/>
<rect x="528" y="847" width="1" height="27" fill="#00f"/>
<rect x="535" y="847" width="1" height="23" fill="#00f"/>
<rect x="542" y="847" width="1" height="15" fill="#00f"/>
<rect x="549" y="847" width="1" height="15" fill="#00f"/>
<rect x="556" y="847" width="1" height="12" fill="#00f"/>
<rect x="563" y="847" width="1" height="4" fill="#00f"/>
<rect x="570" y="836" width="1" height="12" fill="#00f"/>
<rect x="577" y="825" width="1" height="23" fill="#00f"/>
<rect x="584" y="812" width="1" height="36" fill="#00f"/>
<rect x="591" y="805" width="1" height="43" fill="#00f"/>
<rect x="598" y="801" width="1" height="47" fill="#00f"/>
<rect x="605" y="800" width="1" height="48" fill="#00f"/>
<rect x="612" y="800" width="1" height="48" fill="#00f"/>
<rect x="619" y="801" width="1" height="47" fill="#00f"/>
<rect x="626" y="800" width="1" height="48" fill="#00f"/>
<rect x="633" y="797" width="1" height="51" fill="#00f"/>
<rect x="640" y="795" width="1" height="53" fill="#00f"/>
<rect x="647" y="793" width="1" height="55" fill="#00f"/>
<rect x="654" y="792" width="1" height="56" fill="#00f"/>
<rect x="661" y="794" width="1" height="54" fill="#00f"/>
<rect x="668" y="797" width="1" height="51" fill="#00f"/>
<rect x="675" y="799" width="1" height="49" fill="#00f"/>
<rect x="682" y="805" width="1" height="43" fill="#00f"/>
<rect x="689" y="812" width="1" height="36" fill="#00f"/>
<rect x="696" y="816" width="1" height="32" fill="#00f"/>
<rect x="703" y="817" width="1" height="31" fill="#00f"/>
<rect x="710" y="816" width="1" height="32" fill="#00f"/>
<rect x="717" y="817" width="1" height="31" fill="#00f"/>
<rect x="724" y="816" width="1" height="32" fill="#00f"/>
<rect x="731" y="822" width="1" height="26" fill="#00f"/>
<rect x="738" y="827" width="1" height="21" fill="#00f"/>
<rect x="745" y="834" width="1" height="14" fill="#00f"/>
<rect x="752" y="838" width="1" height="10" fill="#00f"/>
<rect x="759" y="838" width="1" height="10" fill="#00f"/>
<rect x="766" y="834" width="1" height="14" fill="#00f"/>
<rect x="773" y="836" width="1" height="12" fill="#00f"/>
<polyline points="81.0,798.4 193.0,798.4 218.4,804.5 246.9,808.6 263.2,808.4 279.5,807.0 299.8,802.5 316.0,798.4 325.4,795.2 336.0,795.2 369.7,794.4 388.0,799.2 564.0,799.2 582.3,803.3 604.3,803.3 610.4,802.5 643.0,802.3 661.3,799.8 683.7,799.8 697.9,802.5 732.5,806.0 756.9,810.6 773.6,813.7" fill="none" stroke="#000" stroke-width="1" stroke-linejoin="round" shape-rendering="crispEdges" />
<polyline points="81.0,918.0 96.3,913.8 116.7,910.7 147.2,908.3 171.6,905.0 185.9,901.0 192.0,898.5 389.0,898.5 401.2,894.5 431.7,889.4 458.2,884.9 472.4,884.9 488.7,887.9 505.0,890.4 515.1,890.4 533.5,888.4 561.9,882.7 773.6,882.7" fill="none" stroke="#000" stroke-width="1" stroke-linejoin="round" shape-rendering="crispEdges" />
<path d="M352.8,742.0L352.8,776.4M342.8,754.9L352.8,775.9L362.8,754.9" fill="none" stroke="#f00" stroke-width="2" stroke-linejoin="miter" shape-rendering="crispEdges"/>
<path d="M465.3,801.3L465.3,835.5M455.3,814.0L465.3,835.0L475.3,814.0" fill="none" stroke="#f00" stroke-width="2" stroke-linejoin="miter" shape-rendering="crispEdges"/>
<path d="M682.3,753.0L682.3,787.6M672.3,766.1L682.3,787.1L692.3,766.1" fill="none" stroke="#f00" stroke-width="2" stroke-linejoin="miter" shape-rendering="crispEdges"/>
<path d="M443.9,925.0L443.9,892.4M433.9,913.9L443.9,892.9L453.9,913.9" fill="none" stroke="#0f0" stroke-width="2" stroke-linejoin="miter" shape-rendering="crispEdges"/>
<path d="M514.1,935.0L514.1,902.2M504.1,923.7L514.1,902.7L524.1,923.7" fill="none" stroke="#0f0" stroke-width="2" stroke-linejoin="miter" shape-rendering="crispEdges"/>
<text x="703.4" y="778" font-size="14" font-weight="bold" fill="#000" text-anchor="start" font-family="'Liberation Sans',sans-serif" textLength="96" lengthAdjust="spacingAndGlyphs" >Osc Sell Signal</text>
</g>
<rect x="79" y="922" width="16" height="15" fill="#d4d0c8" />
<rect x="79" y="922" width="15" height="1" fill="#fff"/>
<rect x="79" y="922" width="1" height="14" fill="#fff"/>
<rect x="79" y="936" width="16" height="1" fill="#404040"/>
<rect x="94" y="922" width="1" height="15" fill="#404040"/>
<rect x="80" y="935" width="14" height="1" fill="#808080"/>
<rect x="93" y="923" width="1" height="13" fill="#808080"/>
<rect x="95" y="922" width="16" height="15" fill="#d4d0c8" />
<rect x="95" y="922" width="15" height="1" fill="#fff"/>
<rect x="95" y="922" width="1" height="14" fill="#fff"/>
<rect x="95" y="936" width="16" height="1" fill="#404040"/>
<rect x="110" y="922" width="1" height="15" fill="#404040"/>
<rect x="96" y="935" width="14" height="1" fill="#808080"/>
<rect x="109" y="923" width="1" height="13" fill="#808080"/>
<path d="M89,926v7l-4,-3.500z" fill="#000"/><path d="M101,926v7l4,-3.500z" fill="#000"/>
<path d="M170,936.5H608L614.5,921.5" fill="none" stroke="#000" stroke-width="1"/>
<path d="M208.2,921.5L214.39999999999998,936.5" fill="none" stroke="#000" stroke-width="1"/>
<path d="M293.3,921.5L299.5,936.5" fill="none" stroke="#000" stroke-width="1"/>
<path d="M377.2,921.5L383.4,936.5" fill="none" stroke="#000" stroke-width="1"/>
<path d="M441.9,921.5L448.09999999999997,936.5" fill="none" stroke="#000" stroke-width="1"/>
<path d="M500.9,921.5L507.09999999999997,936.5" fill="none" stroke="#000" stroke-width="1"/>
<path d="M112.2,921L119,936.5H170L175.7,921" fill="#fff" stroke="#000" stroke-width="1"/>
<rect x="113" y="921" width="62" height="1" fill="#fff"/>
<text x="122.4" y="933.5" font-size="12" font-weight="normal" fill="#000" text-anchor="start" font-family="'Liberation Sans',sans-serif" textLength="43" lengthAdjust="spacingAndGlyphs" >Osc 5,35</text>
<text x="176.3" y="933.5" font-size="12" font-weight="normal" fill="#000" text-anchor="start" font-family="'Liberation Sans',sans-serif" textLength="30" lengthAdjust="spacingAndGlyphs" >CCI 20</text>
<text x="217" y="933.5" font-size="12" font-weight="normal" fill="#000" text-anchor="start" font-family="'Liberation Sans',sans-serif" textLength="74.7" lengthAdjust="spacingAndGlyphs" >MACD 19, 39, 9</text>
<text x="302.2" y="933.5" font-size="12" font-weight="normal" fill="#000" text-anchor="start" font-family="'Liberation Sans',sans-serif" textLength="73" lengthAdjust="spacingAndGlyphs" >Money Flow 11</text>
<text x="386" y="933.5" font-size="12" font-weight="normal" fill="#000" text-anchor="start" font-family="'Liberation Sans',sans-serif" textLength="55" lengthAdjust="spacingAndGlyphs" >RSI 14, 7, 3</text>
<text x="451" y="933.5" font-size="12" font-weight="normal" fill="#000" text-anchor="start" font-family="'Liberation Sans',sans-serif" textLength="49" lengthAdjust="spacingAndGlyphs" >RSI 2, 7, 3</text>
<text x="510.7" y="933.5" font-size="12" font-weight="normal" fill="#000" text-anchor="start" font-family="'Liberation Sans',sans-serif" textLength="93.6" lengthAdjust="spacingAndGlyphs" >On Balance Volume</text>
<rect x="77" y="943" width="1172" height="20" fill="#000" />
<rect x="78" y="944" width="1110" height="18" fill="#d4d0c8" />
<rect x="1189" y="944" width="59" height="18" fill="#ffffe1" />
<rect x="77" y="963" width="1174" height="2" fill="#fff"/>
<rect x="1249" y="943" width="2" height="22" fill="#fff"/>
<rect x="143" y="945" width="1" height="16" fill="#000"/>
<text x="145" y="958" font-size="14" font-weight="bold" fill="#000" text-anchor="start" font-family="'Liberation Sans',sans-serif" textLength="28.9" lengthAdjust="spacingAndGlyphs" >2023</text>
<rect x="283" y="945" width="1" height="16" fill="#000"/>
<text x="285" y="958" font-size="14" font-weight="bold" fill="#000" text-anchor="start" font-family="'Liberation Sans',sans-serif" textLength="23.1" lengthAdjust="spacingAndGlyphs" >Feb</text>
<rect x="416" y="945" width="1" height="16" fill="#000"/>
<text x="418" y="958" font-size="14" font-weight="bold" fill="#000" text-anchor="start" font-family="'Liberation Sans',sans-serif" textLength="23.1" lengthAdjust="spacingAndGlyphs" >Mar</text>
<rect x="577" y="945" width="1" height="16" fill="#000"/>
<text x="579" y="958" font-size="14" font-weight="bold" fill="#000" text-anchor="start" font-family="'Liberation Sans',sans-serif" textLength="22.4" lengthAdjust="spacingAndGlyphs" >Apr</text>
<rect x="710" y="945" width="1" height="16" fill="#000"/>
<text x="712" y="958" font-size="14" font-weight="bold" fill="#000" text-anchor="start" font-family="'Liberation Sans',sans-serif" textLength="25.3" lengthAdjust="spacingAndGlyphs" >May</text>
<rect x="1130" y="945" width="57" height="16" fill="#000" />
<rect x="1131" y="946" width="55" height="14" fill="#ffffe1" />
<text x="1158.5" y="958" font-size="14" font-weight="bold" fill="#000" text-anchor="middle" font-family="'Liberation Sans',sans-serif" textLength="49.0" lengthAdjust="spacingAndGlyphs" >07/28/23</text>
<text x="1218.5" y="958" font-size="14" font-weight="bold" fill="#00f" text-anchor="middle" font-family="'Liberation Sans',sans-serif" textLength="36" lengthAdjust="spacingAndGlyphs" >#3055</text>
</svg></body></html>
